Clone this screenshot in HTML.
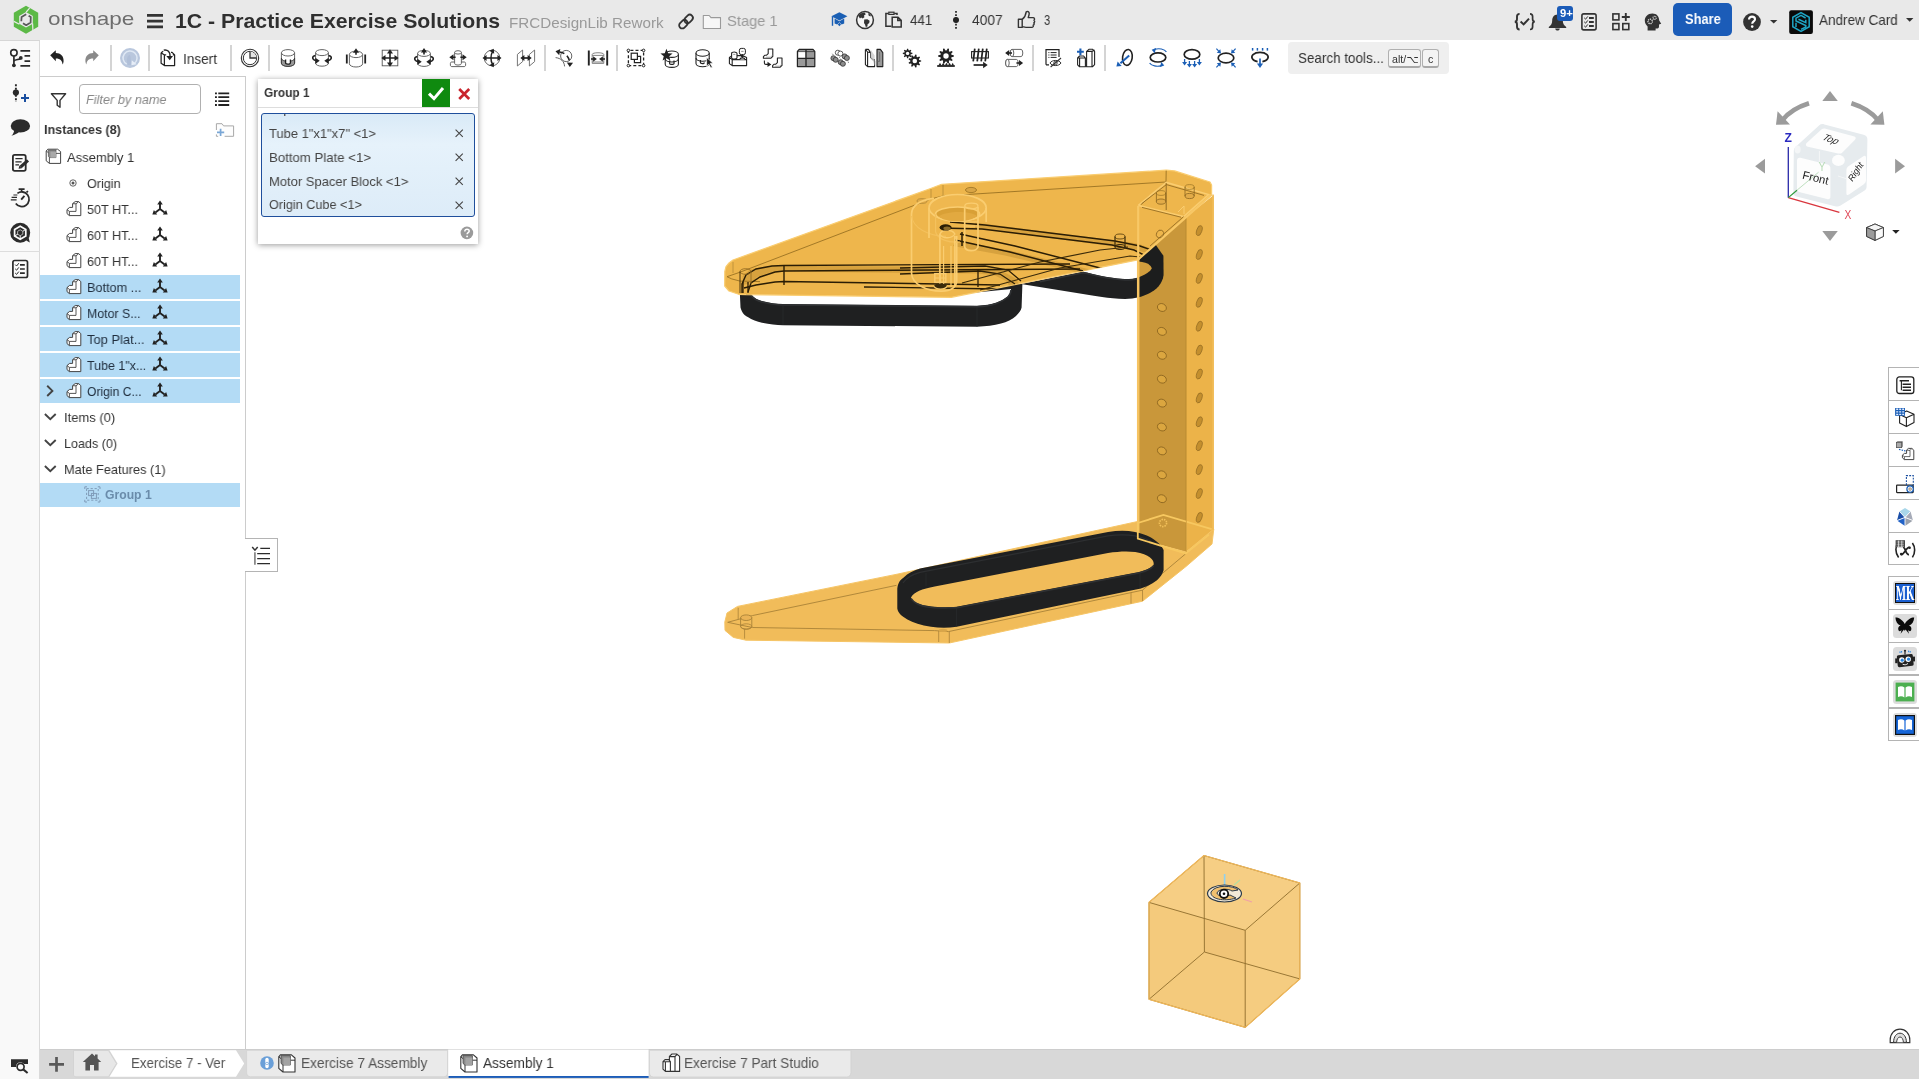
<!DOCTYPE html>
<html><head><meta charset="utf-8"><title>Onshape</title>
<style>
*{box-sizing:border-box;margin:0;padding:0}
html,body{width:1919px;height:1079px;overflow:hidden;background:#fff;font-family:"Liberation Sans","DejaVu Sans",sans-serif;color:#333}
.a{position:absolute}
.t{position:absolute;white-space:nowrap;transform-origin:0 50%;display:block;will-change:transform}
svg{position:absolute;overflow:visible}
#topbar{left:0;top:0;width:1919px;height:39.7px;background:#e9e9e9}
#strip{left:0;top:39.7px;width:40.2px;height:1040px;background:#f9f9f9;border-top:1px solid #d6d6d6;border-right:1px solid #dadada}
#panel{left:40px;top:76px;width:206px;height:974px;background:#fff;border-top:1px solid #ccc;border-right:1px solid #ccc}
#tabbar{left:40px;top:1049.1px;width:1879px;height:30px;background:#d8d8d8;border-top:1px solid #cdcdcd}
.sep{position:absolute;top:45px;width:2px;height:26px;background:#d4d4d4}
.sel{position:absolute;left:40px;width:200px;height:23.7px;background:#b3dbf5}
</style></head>
<body>
<div class="a" id="topbar"></div>
<div class="a" id="strip"></div>
<div class="a" id="panel"></div>
<div class="a" id="tabbar"></div>
<div class="sep" style="left:110px"></div>
<div class="sep" style="left:148px"></div>
<div class="sep" style="left:230px"></div>
<div class="sep" style="left:268px"></div>
<div class="sep" style="left:544px"></div>
<div class="sep" style="left:616px"></div>
<div class="sep" style="left:892px"></div>
<div class="sep" style="left:1032px"></div>
<div class="sep" style="left:1104px"></div>
<div class="a" style="left:1673px;top:3px;width:59px;height:33px;border-radius:5px;background:#1b5cb8"></div>
<div class="a" style="left:1288px;top:42px;width:161px;height:32px;border-radius:4px;background:#efefef"></div>
<div class="a" style="left:1388.2px;top:49.1px;width:33.2px;height:19.4px;border-radius:3px;background:#f4f4f4;border:1px solid #b0b0b0;border-bottom:2px solid #a8a8a8"></div>
<div class="a" style="left:1422.3px;top:49.1px;width:16.5px;height:19.4px;border-radius:3px;background:#f4f4f4;border:1px solid #b0b0b0;border-bottom:2px solid #a8a8a8"></div>
<div class="a" style="left:79px;top:84px;width:122px;height:30px;border-radius:4px;background:#fff;border:1px solid #b0b0b0"></div>
<div class="sel" style="top:275.1px"></div>
<div class="sel" style="top:301.1px"></div>
<div class="sel" style="top:327.1px"></div>
<div class="sel" style="top:353.1px"></div>
<div class="sel" style="top:379.1px"></div>
<div class="sel" style="top:483.2px"></div>
<div class="a" style="left:0;top:251px;width:40px;height:1px;background:#ddd"></div>
<div class="a" style="left:258px;top:79px;width:220px;height:164.5px;background:#fff;box-shadow:0 1px 6px rgba(0,0,0,.4)"></div>
<div class="a" style="left:258px;top:107px;width:220px;height:1px;background:#ddd"></div>
<div class="a" style="left:422px;top:79px;width:28px;height:28px;background:#0f8a0f"></div>
<div class="a" style="left:261px;top:113px;width:214px;height:103.6px;background:linear-gradient(#d9eaf7,#e6f2fb 30%,#ddecf8);border:1.2px solid #1f4f9c;border-radius:3px;overflow:hidden"><span class="t" style="left:6.5px;top:-12.6px;font-size:13.5px;line-height:16px;color:#444">Top Plate &lt;1&gt;</span></div>
<div class="a" style="left:245px;top:538px;width:33px;height:34px;background:#fff;border:1px solid #b4b4b4;border-left:none"></div>
<div class="a" style="left:1888.2px;top:367.4px;width:33px;height:198px;background:#fff;border:1.2px solid #b4b4b4"></div>
<div class="a" style="left:1888.2px;top:576.2px;width:33px;height:165.3px;background:#fff;border:1.2px solid #b4b4b4"></div>
<div class="a" style="left:1889px;top:399.9px;width:31px;height:1.2px;background:#b4b4b4"></div>
<div class="a" style="left:1889px;top:432.9px;width:31px;height:1.2px;background:#b4b4b4"></div>
<div class="a" style="left:1889px;top:465.79999999999995px;width:31px;height:1.2px;background:#b4b4b4"></div>
<div class="a" style="left:1889px;top:498.5px;width:31px;height:1.2px;background:#b4b4b4"></div>
<div class="a" style="left:1889px;top:531.6px;width:31px;height:1.2px;background:#b4b4b4"></div>
<div class="a" style="left:1889px;top:608.6px;width:31px;height:1.2px;background:#b4b4b4"></div>
<div class="a" style="left:1889px;top:641.6px;width:31px;height:1.2px;background:#b4b4b4"></div>
<div class="a" style="left:1889px;top:674.4px;width:31px;height:1.2px;background:#b4b4b4"></div>
<div class="a" style="left:1889px;top:707.4px;width:31px;height:1.2px;background:#b4b4b4"></div>
<svg style="left:13px;top:5px" width="26" height="29" viewBox="0 0 26 29"><polygon points="13,0.8 25.2,7.8 25.2,21.8 13,28.8 0.8,21.8 0.8,7.8" fill="#5cb946"/><polygon points="13,7 19.8,10.9 19.8,18.7 13,22.6 6.2,18.7 6.2,10.9" fill="#e9e9e9"/><path d="M16.6,3.2 L13.2,7 M0.8,16.4 L6.4,19.2 M19.6,18.4 L19.9,26" stroke="#e9e9e9" stroke-width="1.2" fill="none"/><path d="M13.2,9.3 L8.6,11.9 L8.3,16.2 M10,18.2 L13.2,20.2 L17.6,17.6 L17.8,12 L15.6,10.7" stroke="#595959" stroke-width="1.75" fill="none" stroke-linejoin="round"/></svg>
<svg style="left:147px;top:13px" width="16" height="16" viewBox="0 0 16 16"><path d="M0,2.4 H16 M0,8.1 H16 M0,13.8 H16" stroke="#333" stroke-width="2.7"/></svg>
<svg style="left:678px;top:14px" width="16" height="15" viewBox="0 0 16 15"><g transform="rotate(-45 8 7.6)" fill="none" stroke="#333" stroke-width="1.8"><rect x="-0.4" y="4.5" width="9.4" height="6.2" rx="3.1"/><rect x="7" y="4.5" width="9.4" height="6.2" rx="3.1"/></g></svg>
<svg style="left:702px;top:14px" width="20" height="16" viewBox="0 0 20 16"><path d="M1.3,14.5 V1.5 H7.2 L9,3.6 H18.5 V14.5 Z" fill="#f7f7f7" stroke="#9a9a9a" stroke-width="1.1" stroke-linejoin="round"/></svg>
<svg style="left:831px;top:12px" width="17" height="15" viewBox="0 0 17 15"><polygon points="8.4,0.2 16.4,4.2 8.4,8.4 0.4,4.2" fill="#1a5fb4"/><polygon points="3.6,6.6 3.6,11.4 6.2,12.4 8.4,10.2 10.6,12.4 13.2,11.4 13.2,6.6 8.4,9.3" fill="#1a5fb4"/><polygon points="8.4,10.8 10,12.4 8.4,14.2 6.8,12.4" fill="#1a5fb4"/><path d="M1.5,4.6 V13.8" stroke="#1a5fb4" stroke-width="1.4"/></svg>
<svg style="left:855px;top:10px" width="20" height="20" viewBox="0 0 20 20"><circle cx="10" cy="10" r="8.4" fill="#f4f4f4" stroke="#333" stroke-width="1.5"/><path d="M4.3,4.4 C6,3 8,2.3 9.6,2.4 L10.8,4.2 L9,5.4 L9.4,7.2 L7.6,8.4 L6.2,7.6 L5,8.6 L3.6,6.6 Z" fill="#333"/><path d="M9.2,9.6 L12.4,9.2 L14.6,10.8 L14.2,13 L12.6,14.2 L12.4,16.6 L10.8,17 L10,14.6 L9,13 Z" fill="#333"/><path d="M13.2,3 L15.8,5 L15.4,6.4 L13.6,5.6 Z" fill="#333"/></svg>
<svg style="left:885px;top:11px" width="18" height="17" viewBox="0 0 18 17"><path d="M6.4,15.2 H0.9 V2.5 H3.6 M9.2,2.5 H12 V4" fill="none" stroke="#333" stroke-width="1.5"/><rect x="3.8" y="1.2" width="5.2" height="2.2" fill="#e9e9e9" stroke="#333" stroke-width="1.2"/><path d="M7.2,16 V6.2 H13 L16.2,9.4 V16 Z M12.8,6.4 V9.6 H16" fill="none" stroke="#333" stroke-width="1.5"/></svg>
<svg style="left:950px;top:10px" width="12" height="20" viewBox="0 0 12 20"><path d="M6,1 V19" stroke="#222" stroke-width="1.7" stroke-dasharray="1.7 1.5"/><circle cx="6" cy="10" r="3" fill="#222"/></svg>
<svg style="left:1017px;top:10px" width="19" height="19" viewBox="0 0 19 19"><path d="M1.4,9.2 H5.2 V17.4 H1.4 Z" fill="none" stroke="#333" stroke-width="1.4" stroke-linejoin="round"/><path d="M5.2,9.4 C7.4,7.6 8.8,5 9.2,1.8 C10.6,1 12.2,1.8 12.2,3.6 C12.2,5.2 11.6,6.6 11.2,7.6 H16 C17.6,7.6 18,9.4 17,10.2 C18,11 17.8,12.4 16.8,12.8 C17.6,13.8 17,15 16.2,15.2 C16.6,16.4 16,17.4 14.8,17.4 H9 C7.4,17.4 6.4,16.8 5.2,16.6" fill="none" stroke="#333" stroke-width="1.4" stroke-linejoin="round"/></svg>
<svg style="left:1514px;top:13px" width="22" height="18" viewBox="0 0 22 18"><path d="M5.6,0.9 C3.4,0.9 3,2 3,3.6 V6 C3,7.6 2.4,8.6 0.8,8.7 C2.4,8.8 3,9.8 3,11.4 V13.8 C3,15.4 3.4,16.5 5.6,16.5" fill="none" stroke="#333" stroke-width="1.9"/><path d="M16,0.9 C18.2,0.9 18.6,2 18.6,3.6 V6 C18.6,7.6 19.2,8.6 20.8,8.7 C19.2,8.8 18.6,9.8 18.6,11.4 V13.8 C18.6,15.4 18.2,16.5 16,16.5" fill="none" stroke="#333" stroke-width="1.7"/><path d="M6.6,8.6 L9.6,11.4 L15,5.6" fill="none" stroke="#333" stroke-width="2"/></svg>
<svg style="left:1548px;top:14px" width="19" height="17" viewBox="0 0 19 17"><path d="M9.5,0.6 C6,0.6 4.2,3.4 4.2,6.6 C4.2,10 2.8,11.6 0.8,13 V14 H18.2 V13 C16.2,11.6 14.8,10 14.8,6.6 C14.8,3.4 13,0.6 9.5,0.6 Z" fill="#333"/><path d="M7.2,14.6 C7.4,16 8.4,16.6 9.5,16.6 C10.6,16.6 11.6,16 11.8,14.6Z" fill="#333"/></svg>
<div class="a" style="left:1557px;top:6px;width:16.4px;height:15.4px;border-radius:3px;background:#1a5bb8"></div>
<svg style="left:1581px;top:13px" width="16" height="18" viewBox="0 0 16 18"><rect x="0.9" y="0.9" width="14.2" height="16" rx="1.8" fill="none" stroke="#333" stroke-width="1.6"/><path d="M8,5 H12.8 M8,9 H12.8 M8,13 H12.8" stroke="#333" stroke-width="1.8"/><path d="M3.2,4.8 L4.6,6.2 L6.8,3.4 M3.2,8.8 L4.6,10.2 L6.8,7.4 M3.2,12.8 L4.6,14.2 L6.8,11.4" stroke="#333" stroke-width="1" fill="none"/></svg>
<svg style="left:1612px;top:13px" width="18" height="18" viewBox="0 0 18 18"><rect x="0.9" y="0.9" width="6" height="6" fill="none" stroke="#333" stroke-width="1.6"/><rect x="0.9" y="10.6" width="6" height="6" fill="none" stroke="#333" stroke-width="1.6"/><rect x="10.8" y="10.6" width="6" height="6" fill="none" stroke="#333" stroke-width="1.6"/><path d="M13.8,0 V8 M9.8,4 H17.8" stroke="#333" stroke-width="1.9"/></svg>
<svg style="left:1644px;top:13px" width="18" height="18" viewBox="0 0 18 18"><path d="M8.4,0.4 C3.6,0.4 0.8,3.8 0.8,7.6 C0.8,10.4 2.2,12.2 3.6,13.6 V17.6 H11.6 V15.4 H13.4 C14.6,15.4 15,14.6 15,13.6 V11.6 L17.2,10.8 L15.2,7.4 C15.2,3.2 12.6,0.4 8.4,0.4 Z" fill="#333"/><circle cx="6.2" cy="8.4" r="2.2" fill="none" stroke="#e9e9e9" stroke-width="1.3" stroke-dasharray="1.1 0.7"/><circle cx="10.6" cy="4.8" r="1.6" fill="none" stroke="#e9e9e9" stroke-width="1.1" stroke-dasharray="0.9 0.6"/></svg>
<svg style="left:1743px;top:13px" width="18" height="18" viewBox="0 0 18 18"><circle cx="9" cy="9" r="8.9" fill="#333"/><path d="M6,6.6 C6,4.6 7.4,3.6 9,3.6 C10.8,3.6 12,4.8 12,6.2 C12,8.4 9.2,8.4 9.2,10.8" fill="none" stroke="#fff" stroke-width="2.1"/><circle cx="9.2" cy="13.6" r="1.3" fill="#fff"/></svg>
<svg style="left:1770px;top:20px" width="8" height="4" viewBox="0 0 8 4"><polygon points="0,0 7.4,0 3.7,3.6" fill="#333"/></svg>
<svg style="left:1906px;top:18px" width="8" height="4" viewBox="0 0 8 4"><polygon points="0,0 7.4,0 3.7,3.8" fill="#333"/></svg>
<svg style="left:1789px;top:10px" width="24" height="24" viewBox="0 0 24 24"><rect x="0.2" y="0.2" width="23.7" height="23.7" rx="2" fill="#0a0a0a"/><polygon points="12,2.6 20.2,7.3 20.2,16.7 12,21.4 3.8,16.7 3.8,7.3" fill="none" stroke="#1fa5c5" stroke-width="1.5"/><path d="M16.6,8 L12,5.4 L7,8.2 V11 L16.8,15.6 V17 L12,19.4 M7,12.8 V17 M16.8,9.8 V12.6 L9.4,9.2" fill="none" stroke="#1fa5c5" stroke-width="1.5"/></svg>
<svg style="left:46.0px;top:46.5px" width="22" height="22" viewBox="-11.0 -11.0 22 22"><path d="M-6.8,-2.8 L-1.2,-7.8 V-4.9 C3.6,-4.9 6.8,-1.8 6.6,3.2 C6.5,4.6 6.1,5.7 5.5,6.6 C5.6,3 3.6,0.4 -1.2,0.4 V3.2 Z" fill="#222"/></svg>
<svg style="left:81.0px;top:46.5px" width="22" height="22" viewBox="-11.0 -11.0 22 22"><g transform="scale(-1 1)"><path d="M-6.8,-2.8 L-1.2,-7.8 V-4.9 C3.6,-4.9 6.8,-1.8 6.6,3.2 C6.5,4.6 6.1,5.7 5.5,6.6 C5.6,3 3.6,0.4 -1.2,0.4 V3.2 Z" fill="#8a8a8a"/></g></svg>
<svg style="left:118.0px;top:46.0px" width="24" height="24" viewBox="-12.0 -12.0 24 24"><circle r="10" fill="#b9c7dd"/><path d="M-3.2,6.2 A7,7 0 1 1 4.5,5.4" fill="none" stroke="#dfe8f4" stroke-width="1.5"/><path d="M0,-3 C-3,-3 -4,3 -2,7 L1.4,7 C0.6,3 1,-1 0,-3Z" fill="#b0bfd8"/><polygon points="1.8,2.2 6.6,6.2 1.4,7.2" fill="#e6edf7"/></svg>
<svg style="left:157.0px;top:47.0px" width="22" height="22" viewBox="-11.0 -11.0 22 22"><path d="M-6.9,-5.3 V5.3 L-3.6,7.5 H6.6 V-3.1 L4.1,-5.6 H3 M-6.9,-5.3 L-3.6,-3.1 V7.5 M-3.6,-3.1 H-1.8 M4.8,-3.1 H6.6 M-6.9,-5.3 L-4.8,-6.7" fill="none" stroke="#222" stroke-width="1.25" stroke-linejoin="round"/><path d="M-4.3,-7.9 C-0.4,-8.7 2.4,-6 2.1,-1.6" fill="none" stroke="#222" stroke-width="1.4"/><polygon points="-1.7,-2 5,-2 1.7,2.2" fill="#222"/></svg>
<svg style="left:239.2px;top:46.9px" width="22" height="22" viewBox="-11.0 -11.0 22 22"><circle r="8.7" fill="#fff" stroke="#333" stroke-width="1.1"/><circle r="6.7" fill="none" stroke="#333" stroke-width="1"/><path d="M0,-6.4 A6.4,6.4 0 0 1 6.4,0 H0Z" fill="#e4e4e4"/><path d="M0,-6.6 V0 H6.6" fill="none" stroke="#333" stroke-width="1.3"/></svg>
<svg style="left:277.0px;top:47.0px" width="22" height="22" viewBox="-11.0 -11.0 22 22"><path d="M-6.6,-5.2 V5.2 A6.6,3.2 0 0 0 6.6,5.2 V-5.2" fill="#fff" stroke="#555" stroke-width="0.9"/><ellipse cx="0" cy="-5.2" rx="6.6" ry="3.2" fill="#fff" stroke="#555" stroke-width="0.9"/><path d="M-6.6,0.2 V5.2 A6.6,3.2 0 0 0 6.6,5.2 V0.2 A6.6,3.2 0 0 1 -6.6,0.2Z" fill="#999" stroke="#333" stroke-width="0.9"/><path d="M-2.4,1.6 V5 C-2.4,6.4 2.4,6.4 2.4,5 V1.6" fill="#fff" stroke="#222" stroke-width="1.3"/></svg>
<svg style="left:311.0px;top:47.0px" width="22" height="22" viewBox="-11.0 -11.0 22 22"><path d="M-6.4,-5.4 V5.199999999999999 A6.4,3 0 0 0 6.4,5.199999999999999 V-5.4" fill="#fff" stroke="#555" stroke-width="0.9"/><ellipse cx="0" cy="-5.4" rx="6.4" ry="3" fill="#fff" stroke="#555" stroke-width="0.9"/><path d="M-6.6,-2.4 C-10.4,-1.6 -10.4,1.8 -5.4,2.6 M6.6,-2.4 C10.4,-1.6 10.4,1.8 5.4,2.6" fill="none" stroke="#222" stroke-width="1.5"/><polygon points="0.3,0 -4.03,-3.11 -4.03,3.11" fill="#222" transform="translate(-2.6 2.8) rotate(0)"/><polygon points="0.3,0 -4.03,-3.11 -4.03,3.11" fill="#222" transform="translate(2.6 2.8) rotate(180)"/></svg>
<svg style="left:345.0px;top:47.0px" width="22" height="22" viewBox="-11.0 -11.0 22 22"><path d="M-6.6,-3.6 V5.800000000000001 A6.6,3.2 0 0 0 6.6,5.800000000000001 V-3.6" fill="#fff" stroke="#555" stroke-width="0.9"/><ellipse cx="0" cy="-3.6" rx="6.6" ry="3.2" fill="#fff" stroke="#555" stroke-width="0.9"/><path d="M-9.2,-3.6 V5.6 M9.2,-3.6 V5.6" stroke="#222" stroke-width="1.8"/><path d="M0,-3.2 V-6" stroke="#222" stroke-width="1.6"/><polygon points="0.3,0 -4.03,-3.11 -4.03,3.11" fill="#222" transform="translate(0 -9.4) rotate(-90)"/></svg>
<svg style="left:379.0px;top:47.0px" width="22" height="22" viewBox="-11.0 -11.0 22 22"><rect x="-7.8" y="-7.8" width="15.6" height="15.6" fill="#fff" stroke="#555" stroke-width="0.9"/><path d="M-5,0 H5 M0,-5 V5" stroke="#222" stroke-width="1.6"/><polygon points="0.3,0 -3.89,-3.01 -3.89,3.01" fill="#222" transform="translate(-8.4 0) rotate(180)"/><polygon points="0.3,0 -3.89,-3.01 -3.89,3.01" fill="#222" transform="translate(8.4 0) rotate(0)"/><polygon points="0.3,0 -3.89,-3.01 -3.89,3.01" fill="#222" transform="translate(0 -8.4) rotate(-90)"/><polygon points="0.3,0 -3.89,-3.01 -3.89,3.01" fill="#222" transform="translate(0 8.4) rotate(90)"/></svg>
<svg style="left:413.0px;top:47.0px" width="22" height="22" viewBox="-11.0 -11.0 22 22"><path d="M-6.4,-4.6 V5.4 A6.4,3 0 0 0 6.4,5.4 V-4.6" fill="#fff" stroke="#555" stroke-width="0.9"/><ellipse cx="0" cy="-4.6" rx="6.4" ry="3" fill="#fff" stroke="#555" stroke-width="0.9"/><path d="M-6.6,-1.4 C-10.4,-0.6 -10.4,2.8 -5.4,3.6 M6.6,-1.4 C10.4,-0.6 10.4,2.8 5.4,3.6" fill="none" stroke="#222" stroke-width="1.5"/><polygon points="0.3,0 -4.03,-3.11 -4.03,3.11" fill="#222" transform="translate(-2.6 3.8) rotate(0)"/><polygon points="0.3,0 -4.03,-3.11 -4.03,3.11" fill="#222" transform="translate(2.6 3.8) rotate(180)"/><path d="M0,-3.6 V-6" stroke="#222" stroke-width="1.6"/><polygon points="0.3,0 -4.03,-3.11 -4.03,3.11" fill="#222" transform="translate(0 -9.6) rotate(-90)"/></svg>
<svg style="left:447.0px;top:47.0px" width="22" height="22" viewBox="-11.0 -11.0 22 22"><path d="M-7.6,5.4 C-7.6,4.4 -7,4 -6,4 H6 C7,4 7.6,4.4 7.6,5.4 V7 C7.6,8 7,8.6 6,8.6 H-6 C-7,8.6 -7.6,8 -7.6,7Z" fill="#fff" stroke="#555" stroke-width="0.9"/><path d="M-3.4,-5.6 V5.4 A3.4,1.7 0 0 0 3.4,5.4 V-5.6" fill="#fff" stroke="#555" stroke-width="0.9"/><ellipse cx="0" cy="-5.6" rx="3.4" ry="1.7" fill="#fff" stroke="#555" stroke-width="0.9"/><path d="M-5,-0.8 H-2.4 M5,-0.8 H2.4" stroke="#222" stroke-width="1.6"/><polygon points="0.3,0 -3.89,-3.01 -3.89,3.01" fill="#222" transform="translate(-8.4 -0.8) rotate(180)"/><polygon points="0.3,0 -3.89,-3.01 -3.89,3.01" fill="#222" transform="translate(8.4 -0.8) rotate(0)"/></svg>
<svg style="left:481.0px;top:47.0px" width="22" height="22" viewBox="-11.0 -11.0 22 22"><circle r="7.8" fill="#fff" stroke="#555" stroke-width="0.9"/><path d="M-6,0 H6 M0.6,-6.4 C-1.6,-3 -1.6,3 0.6,6.4" fill="none" stroke="#222" stroke-width="1.5"/><polygon points="0.3,0 -3.76,-2.90 -3.76,2.90" fill="#222" transform="translate(-9.2 0) rotate(180)"/><polygon points="0.3,0 -3.76,-2.90 -3.76,2.90" fill="#222" transform="translate(9.2 0) rotate(0)"/><polygon points="0.3,0 -3.76,-2.90 -3.76,2.90" fill="#222" transform="translate(1.6 -9) rotate(-60)"/><polygon points="0.3,0 -3.76,-2.90 -3.76,2.90" fill="#222" transform="translate(1.6 9) rotate(60)"/></svg>
<svg style="left:515.0px;top:47.0px" width="22" height="22" viewBox="-11.0 -11.0 22 22"><path d="M-8.6,-3.6 L-3.4,-8 V3.6 L-8.6,8 Z M3.4,-3.6 L8.6,-8 V3.6 L3.4,8 Z" fill="#fff" stroke="#666" stroke-width="0.9"/><path d="M-2.4,0 H2.4" stroke="#222" stroke-width="1.7"/><polygon points="0.3,0 -3.76,-2.90 -3.76,2.90" fill="#222" transform="translate(-5.4 0) rotate(180)"/><polygon points="0.3,0 -3.76,-2.90 -3.76,2.90" fill="#222" transform="translate(5.4 0) rotate(0)"/></svg>
<svg style="left:553.0px;top:47.0px" width="22" height="22" viewBox="-11.0 -11.0 22 22"><circle cx="2.2" cy="-2" r="5.6" fill="none" stroke="#555" stroke-width="0.9"/><path d="M-8.4,-0.4 C-3,0.2 0.2,3.4 0.6,8.4" fill="none" stroke="#555" stroke-width="0.9"/><path d="M-4.6,-6 C1,-5.6 5.4,-1 5.6,4.8" fill="none" stroke="#222" stroke-width="1.6" stroke-dasharray="5.2 3.4"/><polygon points="0.3,0 -4.03,-3.11 -4.03,3.11" fill="#222" transform="translate(-8.2 -6.6) rotate(190)"/><polygon points="0.3,0 -4.03,-3.11 -4.03,3.11" fill="#222" transform="translate(5.8 8.6) rotate(92)"/></svg>
<svg style="left:587.0px;top:47.0px" width="22" height="22" viewBox="-11.0 -11.0 22 22"><path d="M-5.8,-3.6 C-5.8,-5.8 5.8,-5.8 5.8,-3.6 V5.4 H-5.8Z M-5.8,-2.6 H5.8 M-5.8,4 H5.8" fill="#fff" stroke="#777" stroke-width="0.9"/><path d="M-9.2,-7.6 V7.6 M9.2,-7.6 V7.6" stroke="#222" stroke-width="1.9"/><path d="M-7,1 H-4 M7,1 H4" stroke="#222" stroke-width="1.5"/><polygon points="0.3,0 -3.49,-2.70 -3.49,2.70" fill="#222" transform="translate(-1.4 1) rotate(0)"/><polygon points="0.3,0 -3.49,-2.70 -3.49,2.70" fill="#222" transform="translate(1.4 1) rotate(180)"/></svg>
<svg style="left:625.0px;top:47.0px" width="22" height="22" viewBox="-11.0 -11.0 22 22"><rect x="-7.6" y="-7.6" width="15.2" height="15.2" fill="none" stroke="#222" stroke-width="1.3" stroke-dasharray="3 2.1" stroke-dashoffset="-2"/><rect x="-4.8" y="-4.8" width="6.2" height="6.2" fill="#fff" stroke="#222" stroke-width="1.2"/><path d="M1.4,-1.6 H4.6 V4.6 H-1.6 V1.4" fill="none" stroke="#222" stroke-width="1.2"/><circle cx="-7.6" cy="-7.6" r="1.3" fill="#fff" stroke="#222" stroke-width="1"/><circle cx="-7.6" cy="7.6" r="1.3" fill="#fff" stroke="#222" stroke-width="1"/><circle cx="7.6" cy="-7.6" r="1.3" fill="#fff" stroke="#222" stroke-width="1"/><circle cx="7.6" cy="7.6" r="1.3" fill="#fff" stroke="#222" stroke-width="1"/></svg>
<svg style="left:659.0px;top:47.0px" width="22" height="22" viewBox="-11.0 -11.0 22 22"><path d="M-4.8,-3.8 V6.2 A6.6,3.2 0 0 0 8.4,6.2 V-3.8" fill="#fff" stroke="#222" stroke-width="1.1"/><ellipse cx="1.8" cy="-3.8" rx="6.6" ry="3.2" fill="#fff" stroke="#222" stroke-width="1.1"/><path d="M-4.8,0.8 A6.6,3.2 0 0 0 8.4,0.8" fill="none" stroke="#222" stroke-width="1.1"/><path d="M-0.4,2.6 V5.4 C-0.4,6.8 4,6.8 4,5.4 V2.6" fill="none" stroke="#222" stroke-width="1.2"/><polygon points="-3.6,-9.2 -1.8,-4.8 2.6,-4.6 -0.8,-1.8 0.4,2.6 -3.6,0.2 -7.4,2.6 -6.2,-1.8 -9.6,-4.6 -5.2,-4.8" fill="#222"/></svg>
<svg style="left:693.0px;top:47.0px" width="22" height="22" viewBox="-11.0 -11.0 22 22"><path d="M-8.0,-5 V5.6 A6.6,3.2 0 0 0 5.199999999999999,5.6 V-5" fill="#fff" stroke="#222" stroke-width="1.1"/><ellipse cx="-1.4" cy="-5" rx="6.6" ry="3.2" fill="#fff" stroke="#222" stroke-width="1.1"/><path d="M-8,0 A6.6,3.2 0 0 0 5.2,0" fill="none" stroke="#222" stroke-width="1.1"/><path d="M-3.6,2 V4.6 C-3.6,6 0.4,6 0.4,4.6" fill="none" stroke="#222" stroke-width="1.2"/><path d="M2.6,-0.6 L9,5.2 L6.2,5.4 L8.4,9.2 L6.8,10 L4.8,6.2 L2.6,8.2 Z" fill="#222" stroke="#fff" stroke-width="0.7"/></svg>
<svg style="left:727.0px;top:47.0px" width="22" height="22" viewBox="-11.0 -11.0 22 22"><path d="M-8.6,-0.6 L-6,-2.4 H4.6 L8.6,-0.4 V7.6 H-5.8 L-8.6,5.6 Z M-5.8,1.6 V7.6 M-8.6,-0.6 L-5.8,1.6 H8.6" fill="#fff" stroke="#222" stroke-width="1.1" stroke-linejoin="round"/><path d="M-6.4,-1.6 V-4.6 C-6.4,-6.4 -1,-6.4 -1,-4.6 V-0.2 C-1,1.4 -6.4,1.4 -6.4,-0.2Z" fill="#fff" stroke="#222" stroke-width="1.1"/><path d="M-4.8,-3.6 H-2.6" stroke="#888" stroke-width="0.9"/><rect x="1.4" y="-9.6" width="6" height="6.2" rx="1.8" fill="#fff" stroke="#222" stroke-width="1"/><path d="M3.2,-6.6 H5.6" stroke="#888" stroke-width="0.9"/><path d="M4.4,-3.4 V-1.4" stroke="#222" stroke-width="0.9"/><polygon points="2.6,-2 6.2,-2 4.4,0.2" fill="#222"/><path d="M2,1.4 C2,-0.6 6.8,-0.6 6.8,1.4" fill="#fff" stroke="#222" stroke-width="1.1"/></svg>
<svg style="left:761.0px;top:47.0px" width="22" height="22" viewBox="-11.0 -11.0 22 22"><path d="M-7,-2.8 h1.6 l1.6,-1.6 v-4.6 h4.6 v7.4 l-1.8,1.8 h-7.6 l0,-1.6 Z" fill="#fff" stroke="#222" stroke-width="1.1" stroke-linejoin="round"/><path d="M-6,-0.8 H-1.6 L0.4,-2.6 M-1.6,-0.8 L-1.6,-1" fill="none" stroke="#999" stroke-width="0.8"/><path d="M2.2,6.2 h1.6 l1.6,-1.6 v-4.6 h4.6 v7.4 l-1.8,1.8 h-7.6 l0,-1.6 Z" fill="#fff" stroke="#222" stroke-width="1.1" stroke-linejoin="round" transform="translate(0 0)"/><path d="M3.2,8.2 H7.6 L9.6,6.4" fill="none" stroke="#999" stroke-width="0.8"/><path d="M-7.6,2.4 V5 C-7.6,6 -7,6.4 -6,6.4 H-3.6" fill="none" stroke="#222" stroke-width="1.1"/><polygon points="0.3,0 -3.49,-2.70 -3.49,2.70" fill="#222" transform="translate(-1 6.4) rotate(0)"/></svg>
<svg style="left:795.0px;top:47.0px" width="22" height="22" viewBox="-11.0 -11.0 22 22"><path d="M-8.6,-6.6 L-6.8,-8.6 H7 L8.8,-6.6 V8.6 H-8.6 Z" fill="#999" stroke="#222" stroke-width="1.2" stroke-linejoin="round"/><rect x="-7.6" y="-6.6" width="7" height="6.6" fill="#fff"/><path d="M-8.6,0.4 H8.8 M0,-8.4 V8.6" stroke="#222" stroke-width="1.3"/><path d="M-8.4,-6.4 H8.6" stroke="#222" stroke-width="0.7"/></svg>
<svg style="left:829.0px;top:47.0px" width="22" height="22" viewBox="-11.0 -11.0 22 22"><circle cx="-2.2" cy="-5.3" r="2.5" fill="#fff" stroke="#333" stroke-width="0.8"/><circle cx="0.4" cy="-4.4" r="2.5" fill="#fff" stroke="#333" stroke-width="0.8"/><circle cx="-6.6" cy="0.2" r="2.5" fill="#8c8c8c" stroke="#333" stroke-width="0.8"/><circle cx="-4.3" cy="1.8" r="2.5" fill="#8c8c8c" stroke="#333" stroke-width="0.8"/><circle cx="4.7" cy="-1.6" r="2.5" fill="#8c8c8c" stroke="#333" stroke-width="0.8"/><circle cx="6.9" cy="0" r="2.5" fill="#8c8c8c" stroke="#333" stroke-width="0.8"/><circle cx="0.7" cy="4.2" r="2.5" fill="#8c8c8c" stroke="#333" stroke-width="0.8"/><circle cx="2.9" cy="5.8" r="2.5" fill="#8c8c8c" stroke="#333" stroke-width="0.8"/><path d="M-7.6,-4.2 L-6.8,-3.2 M7.8,4 L8.8,4.4 M-0.6,-0.6 L0.2,0.2" stroke="#333" stroke-width="0.8"/></svg>
<svg style="left:863.0px;top:47.0px" width="22" height="22" viewBox="-11.0 -11.0 22 22"><path d="M-8.6,-8.6 H-5.6 L-3.4,-5.4 V-0.6 L-1.2,1.6 H1 M-8.6,-8.6 V6.6 L-6.4,8.6 H0.6 V3 L-1.8,0.6 M-6.4,-6 V8.6 M-8.6,-8.6 L-6.4,-6 L-3.4,-5.4" fill="#fff" stroke="#222" stroke-width="1.1" stroke-linejoin="round"/><path d="M-3.4,-8.6 L0.6,-2.6 V8 L-1,3 L-3.4,-0.6Z" fill="#ccc" opacity="0.8"/><path d="M3,-8.6 H6.4 L8.8,-5.4 V8.6 H3 Z" fill="#999" stroke="#222" stroke-width="1.1" stroke-linejoin="round"/><path d="M5.6,-6 V3.4 H3.4" fill="none" stroke="#666" stroke-width="0.8"/></svg>
<svg style="left:901.0px;top:47.0px" width="22" height="22" viewBox="-11.0 -11.0 22 22"><polygon points="0.37,-5.13 0.37,-4.07 -1.23,-3.68 -1.51,-3.01 -0.65,-1.60 -1.40,-0.85 -2.81,-1.71 -3.48,-1.43 -3.87,0.17 -4.93,0.17 -5.32,-1.43 -5.99,-1.71 -7.40,-0.85 -8.15,-1.60 -7.29,-3.01 -7.57,-3.68 -9.17,-4.07 -9.17,-5.13 -7.57,-5.52 -7.29,-6.19 -8.15,-7.60 -7.40,-8.35 -5.99,-7.49 -5.32,-7.77 -4.93,-9.37 -3.87,-9.37 -3.48,-7.77 -2.81,-7.49 -1.40,-8.35 -0.65,-7.60 -1.51,-6.19 -1.23,-5.52" fill="#222"/><circle cx="-4.4" cy="-4.6" r="1.7" fill="#fff"/><polygon points="9.17,2.38 9.17,3.62 7.16,4.12 6.86,4.94 8.08,6.62 7.28,7.57 5.42,6.66 4.66,7.10 4.52,9.16 3.29,9.38 2.45,7.49 1.59,7.33 0.16,8.83 -0.93,8.20 -0.35,6.22 -0.91,5.54 -2.97,5.77 -3.40,4.59 -1.68,3.44 -1.68,2.56 -3.40,1.41 -2.97,0.23 -0.91,0.46 -0.35,-0.22 -0.93,-2.20 0.16,-2.83 1.59,-1.33 2.45,-1.49 3.29,-3.38 4.52,-3.16 4.66,-1.10 5.42,-0.66 7.28,-1.57 8.08,-0.62 6.86,1.06 7.16,1.88" fill="#222"/><circle cx="2.8" cy="3" r="2.3" fill="#fff"/></svg>
<svg style="left:935.0px;top:47.0px" width="22" height="22" viewBox="-11.0 -11.0 22 22"><polygon points="7.77,-2.69 7.77,-1.31 5.46,-0.74 5.15,0.19 6.69,2.01 5.88,3.12 3.68,2.22 2.88,2.80 3.05,5.18 1.75,5.60 0.49,3.58 -0.49,3.58 -1.75,5.60 -3.05,5.18 -2.88,2.80 -3.68,2.22 -5.88,3.12 -6.69,2.01 -5.15,0.19 -5.46,-0.74 -7.77,-1.31 -7.77,-2.69 -5.46,-3.26 -5.15,-4.19 -6.69,-6.01 -5.88,-7.12 -3.68,-6.22 -2.88,-6.80 -3.05,-9.18 -1.75,-9.60 -0.49,-7.58 0.49,-7.58 1.75,-9.60 3.05,-9.18 2.88,-6.80 3.68,-6.22 5.88,-7.12 6.69,-6.01 5.15,-4.19 5.46,-3.26" fill="#222"/><circle cx="0" cy="-2" r="2.7" fill="#fff"/><path d="M-8.8,8 H8.8" stroke="#222" stroke-width="1.8"/><path d="M-7.6,7.4 L-6,4.8 L-4.4,7.4 L-2.8,4.8 L-1.2,7.4 L0.4,4.8 L2,7.4 L3.6,4.8 L5.2,7.4 L6.8,4.8 L8,7.4Z" fill="#222"/></svg>
<svg style="left:969.0px;top:47.0px" width="22" height="22" viewBox="-11.0 -11.0 22 22"><rect x="-8.4" y="-6.4" width="16.8" height="6.4" fill="#fff" stroke="#222" stroke-width="1.1"/><path d="M-5.2,-9.4 L-6.8,3.4" stroke="#222" stroke-width="1.7"/><path d="M-1.2,-9.4 L-2.8,3.4" stroke="#222" stroke-width="1.7"/><path d="M2.8,-9.4 L1.2,3.4" stroke="#222" stroke-width="1.7"/><path d="M6.8,-9.4 L5.2,3.4" stroke="#222" stroke-width="1.7"/><path d="M-6.4,7 H4" stroke="#222" stroke-width="1.7"/><polygon points="0.3,0 -4.29,-3.32 -4.29,3.32" fill="#222" transform="translate(7.4 7) rotate(0)"/></svg>
<svg style="left:1003.0px;top:47.0px" width="22" height="22" viewBox="-11.0 -11.0 22 22"><path d="M-2,-8.6 H7 A1.8,3.6 0 0 1 7,-1.4 H-2 A1.8,3.6 0 0 1 -2,-8.6Z" fill="#fff" stroke="#555" stroke-width="0.9"/><ellipse cx="-2" cy="-5" rx="1.8" ry="3.6" fill="#fff" stroke="#555" stroke-width="0.9"/><path d="M-6.6,1.4 H2.4000000000000004 A1.8,3.6 0 0 1 2.4000000000000004,8.6 H-6.6 A1.8,3.6 0 0 1 -6.6,1.4Z" fill="#fff" stroke="#555" stroke-width="0.9"/><ellipse cx="-6.6" cy="5" rx="1.8" ry="3.6" fill="#fff" stroke="#555" stroke-width="0.9"/><path d="M-5,-5 H-2" stroke="#222" stroke-width="1.6"/><polygon points="0.3,0 -3.76,-2.90 -3.76,2.90" fill="#222" transform="translate(-8.6 -5) rotate(180)"/><path d="M2.4,5 H5.4" stroke="#222" stroke-width="1.6"/><polygon points="0.3,0 -3.76,-2.90 -3.76,2.90" fill="#222" transform="translate(8.8 5) rotate(0)"/></svg>
<svg style="left:1042.0px;top:47.0px" width="22" height="22" viewBox="-11.0 -11.0 22 22"><path d="M-7,6.8 H-4 M-7,6.8 V-8.4 H6 V-1" fill="none" stroke="#222" stroke-width="1.2"/><path d="M-2.4,-5.4 H3.6 M-2.4,-3 H3.6 M-2.4,-0.6 H3.6" stroke="#222" stroke-width="1"/><path d="M-4.6,-5.4 H-3.6 M-4.6,-3 H-3.6 M-4.6,-0.6 H-3.6" stroke="#222" stroke-width="1"/><path d="M-3,5 C-1,1.6 6,1.6 8,5 C6,8.4 -1,8.4 -3,5Z" fill="none" stroke="#333" stroke-width="1"/><circle cx="2.5" cy="5" r="1.7" fill="none" stroke="#333" stroke-width="0.9"/><path d="M-2.4,9 L8,0" stroke="#333" stroke-width="1.1"/></svg>
<svg style="left:1075.0px;top:47.0px" width="22" height="22" viewBox="-11.0 -11.0 22 22"><path d="M0.6,-6.6 L3.2,-8.8 H6.4 L8.6,-6.6 V6.6 L6.4,8.8 H0.6 Z M0.6,-6.6 H6 V8.8 M6,-6.6 L8.6,-8" fill="#fff" stroke="#222" stroke-width="1.1" stroke-linejoin="round"/><path d="M-8.4,0 L-6.4,-2 H-2.4 L-0.6,0 V8.8 H-6.4 L-8.4,6.8Z M-6.4,0 H-0.8 M-6.4,0 V8.8 M-8.4,0 L-6.4,0" fill="#fff" stroke="#222" stroke-width="1.1" stroke-linejoin="round"/><path d="M-5.6,-9.6 V-2.8 M-9,-6.2 H-2.2" stroke="#1b5fb6" stroke-width="2.1"/></svg>
<svg style="left:1114.0px;top:47.0px" width="22" height="22" viewBox="-11.0 -11.0 22 22"><ellipse cx="2.4" cy="-0.6" rx="4.8" ry="8" fill="none" stroke="#222" stroke-width="1.6" transform="rotate(8 2.4 -0.6)"/><path d="M4.2,-2.4 L-4.6,5.2" stroke="#1b5fb6" stroke-width="2"/><polygon points="0.3,0 -4.03,-3.11 -4.03,3.11" fill="#1b5fb6" transform="translate(-8.4 8.4) rotate(139)"/></svg>
<svg style="left:1147.0px;top:47.0px" width="22" height="22" viewBox="-11.0 -11.0 22 22"><ellipse cx="0" cy="-0.6" rx="7.8" ry="4.6" fill="none" stroke="#222" stroke-width="1.7"/><path d="M-3.4,-8.6 C1,-10 6.4,-9 8.4,-6.2 M3.4,7.6 C-1,9 -6.4,8 -8.4,5" fill="none" stroke="#1b5fb6" stroke-width="1.2"/><polygon points="0.3,0 -3.49,-2.70 -3.49,2.70" fill="#1b5fb6" transform="translate(-6 -8.2) rotate(195)"/><polygon points="0.3,0 -3.49,-2.70 -3.49,2.70" fill="#1b5fb6" transform="translate(6 7.4) rotate(15)"/></svg>
<svg style="left:1181.0px;top:47.0px" width="22" height="22" viewBox="-11.0 -11.0 22 22"><ellipse cx="0" cy="-3.6" rx="7.8" ry="4.8" fill="none" stroke="#222" stroke-width="1.7"/><path d="M-7.4,1.0 V4.6" stroke="#1b5fb6" stroke-width="1.3"/><polygon points="0.3,0 -3.22,-2.49 -3.22,2.49" fill="#1b5fb6" transform="translate(-7.4 7.2) rotate(90)"/><path d="M-2.6,2.9999999999999996 V6.6" stroke="#1b5fb6" stroke-width="1.3"/><polygon points="0.3,0 -3.22,-2.49 -3.22,2.49" fill="#1b5fb6" transform="translate(-2.6 9.2) rotate(90)"/><path d="M2.6,2.9999999999999996 V6.6" stroke="#1b5fb6" stroke-width="1.3"/><polygon points="0.3,0 -3.22,-2.49 -3.22,2.49" fill="#1b5fb6" transform="translate(2.6 9.2) rotate(90)"/><path d="M7.4,1.0 V4.6" stroke="#1b5fb6" stroke-width="1.3"/><polygon points="0.3,0 -3.22,-2.49 -3.22,2.49" fill="#1b5fb6" transform="translate(7.4 7.2) rotate(90)"/></svg>
<svg style="left:1215.0px;top:47.0px" width="22" height="22" viewBox="-11.0 -11.0 22 22"><ellipse cx="0" cy="0" rx="7.8" ry="4.8" fill="none" stroke="#222" stroke-width="1.7"/><path d="M-9.6,-9.4 L-6.6,-6.2" stroke="#1b5fb6" stroke-width="1.2"/><polygon points="0.3,0 -3.22,-2.49 -3.22,2.49" fill="#1b5fb6" transform="translate(-5.2 -4.8) rotate(45)"/><path d="M-9.6,9.4 L-6.6,6.2" stroke="#1b5fb6" stroke-width="1.2"/><polygon points="0.3,0 -3.22,-2.49 -3.22,2.49" fill="#1b5fb6" transform="translate(-5.2 4.8) rotate(-45)"/><path d="M9.6,-9.4 L6.6,-6.2" stroke="#1b5fb6" stroke-width="1.2"/><polygon points="0.3,0 -3.22,-2.49 -3.22,2.49" fill="#1b5fb6" transform="translate(5.2 -4.8) rotate(135)"/><path d="M9.6,9.4 L6.6,6.2" stroke="#1b5fb6" stroke-width="1.2"/><polygon points="0.3,0 -3.22,-2.49 -3.22,2.49" fill="#1b5fb6" transform="translate(5.2 4.8) rotate(225)"/></svg>
<svg style="left:1249.0px;top:47.0px" width="22" height="22" viewBox="-11.0 -11.0 22 22"><path d="M2.4,3.6 C8,2.6 9.4,-1 7,-3.4 C3.6,-6.4 -3.6,-6.4 -7,-3.4 C-9.4,-1 -8,2.6 -2.4,3.6" fill="none" stroke="#222" stroke-width="1.7"/><path d="M-7.4,-10 V-7.4" stroke="#1b5fb6" stroke-width="1.5"/><path d="M-2.6,-10 V-7.4" stroke="#1b5fb6" stroke-width="1.5"/><path d="M2.6,-10 V-7.4" stroke="#1b5fb6" stroke-width="1.5"/><path d="M7.4,-10 V-7.4" stroke="#1b5fb6" stroke-width="1.5"/><path d="M0,0.6 V6" stroke="#1b5fb6" stroke-width="1.7"/><polygon points="0.3,0 -4.03,-3.11 -4.03,3.11" fill="#1b5fb6" transform="translate(0 9.6) rotate(90)"/></svg>
<svg style="left:8px;top:48px" width="24" height="21" viewBox="0 0 24 21"><circle cx="5.9" cy="4.8" r="3.2" fill="#fff" stroke="#2b2b2b" stroke-width="1.6"/><path d="M5.9,8 V17.3 M5.9,13.6 C5.9,11 12.8,12 12.8,9.9" fill="none" stroke="#2b2b2b" stroke-width="1.7"/><circle cx="5.9" cy="17.3" r="1.9" fill="#2b2b2b"/><circle cx="12.8" cy="9.9" r="1.9" fill="#2b2b2b"/><path d="M12.4,2.9 H22.1 M16.5,7.9 H22.1 M16.5,13.1 H22.1 M12.4,17.9 H22.1" stroke="#2b2b2b" stroke-width="1.9"/></svg>
<svg style="left:8px;top:82px" width="24" height="22" viewBox="0 0 24 22"><path d="M7.9,2.3 V19.9" stroke="#2b2b2b" stroke-width="1.9" stroke-dasharray="1.9 1.6"/><circle cx="7.9" cy="10.6" r="3.1" fill="#2b2b2b"/><path d="M17,11.9 V19.9 M13,15.9 H21" stroke="#1a4fa0" stroke-width="2"/></svg>
<svg style="left:8px;top:117px" width="24" height="20" viewBox="0 0 24 20"><ellipse cx="12.4" cy="8.9" rx="9.7" ry="6.6" fill="#2b2b2b"/><path d="M6.4,12.4 C6,15.4 5,17.2 3.4,18.8 C6.6,18 9.6,16.6 11.4,14.6Z" fill="#2b2b2b"/></svg>
<svg style="left:10px;top:152px" width="22" height="22" viewBox="0 0 22 22"><rect x="2.9" y="2.9" width="12.8" height="16" rx="1.8" fill="#fbfbfb" stroke="#2b2b2b" stroke-width="1.8"/><path d="M5.4,6.7 H12.6 M5.4,9.9 H11.6 M5.4,12.9 H9" stroke="#2b2b2b" stroke-width="1.3"/><path d="M18,8.4 L10.6,15" stroke="#2b2b2b" stroke-width="3.1"/><polygon points="8.6,16.8 9.4,13.6 11.8,16.2" fill="#2b2b2b"/><path d="M19,7.4 L18,8.4" stroke="#fbfbfb" stroke-width="0"/></svg>
<svg style="left:9px;top:187px" width="24" height="22" viewBox="0 0 24 22"><path d="M8.4,6.4 A7.3,7.3 0 1 1 6.8,16.4" fill="none" stroke="#2b2b2b" stroke-width="1.8"/><path d="M9.6,2.2 H15.6 M12.6,2.2 V4.8 M17.6,5.4 L18.9,4" stroke="#2b2b2b" stroke-width="1.7"/><path d="M4.4,8 H8.4 M2.6,10.4 H8 M1.8,12.8 H7.6" stroke="#2b2b2b" stroke-width="1.2"/><path d="M12.2,12.6 L15.4,8.8" stroke="#2b2b2b" stroke-width="1.9"/></svg>
<svg style="left:9px;top:222px" width="24" height="22" viewBox="0 0 24 22"><circle cx="11.2" cy="10.7" r="10" fill="#2b2b2b"/><polygon points="17.2,18.4 20.8,20.4 19.6,15.4" fill="#2b2b2b"/><polygon points="11.2,4.2 16.8,7.4 16.8,14 11.2,17.2 5.6,14 5.6,7.4" fill="none" stroke="#fbfbfb" stroke-width="1.7"/><polygon points="11.2,7.8 13.8,9.3 13.8,12.2 11.2,13.7 8.6,12.2 8.6,9.3" fill="none" stroke="#bbb" stroke-width="0.9"/><path d="M16.8,7.4 L13.8,9.3 M5.6,14 L8.8,12.2 M11.2,17.2 L11.2,13.6" stroke="#fbfbfb" stroke-width="1"/></svg>
<svg style="left:11px;top:259px" width="19" height="20" viewBox="0 0 19 20"><rect x="1.9" y="1.5" width="14.6" height="17" rx="1.8" fill="#fbfbfb" stroke="#2b2b2b" stroke-width="1.7"/><path d="M9,5.8 H13.8 M9,10 H13.8 M9,14.2 H13.8" stroke="#2b2b2b" stroke-width="1.7"/><path d="M4.2,5.6 L5.6,7 L7.8,4.2 M4.2,9.8 L5.6,11.2 L7.8,8.4 M4.2,14 L5.6,15.4 L7.8,12.6" stroke="#2b2b2b" stroke-width="1" fill="none"/></svg>
<svg style="left:50px;top:92px" width="17" height="17" viewBox="0 0 17 17"><path d="M1.4,1.8 H15.6 L10,8.4 V15.2 L7.2,13.2 V8.4 Z" fill="none" stroke="#333" stroke-width="1.4" stroke-linejoin="round"/></svg>
<svg style="left:214.9px;top:92px" width="15" height="15" viewBox="0 0 15 15"><path d="M0,1.3 H1.9 M3.3,1.3 H14.2" stroke="#222" stroke-width="1.8"/><path d="M0,5.2 H1.9 M3.3,5.2 H14.2" stroke="#222" stroke-width="1.8"/><path d="M0,9.1 H1.9 M3.3,9.1 H14.2" stroke="#222" stroke-width="1.8"/><path d="M0,13 H1.9 M3.3,13 H14.2" stroke="#222" stroke-width="1.8"/></svg>
<svg style="left:215px;top:122px" width="20" height="16" viewBox="0 0 20 16"><path d="M1.4,8 V1.7 H7 L8.6,3.9 H18.6 V14.3 H9.6" fill="#fdfdfd" stroke="#a8a8a8" stroke-width="1"/><path d="M1.4,12.4 V14.3 H3.2" fill="none" stroke="#a8a8a8" stroke-width="1"/><path d="M5.6,6.8 V14 M2,10.4 H9.2" stroke="#7aa7d6" stroke-width="1.7"/></svg>
<svg style="left:45px;top:148px" width="17" height="17" viewBox="0 0 17 17"><path d="M1.2,3 L2.8,1.2 H12.6 L15.6,3.6 V15.4 H4.4 L1.2,12.8 Z" fill="#fff" stroke="#444" stroke-width="1" stroke-linejoin="round"/><path d="M1.2,3 L4.4,5.4 V15.4 M4.4,5.4 H15.4" fill="none" stroke="#444" stroke-width="0.9"/><path d="M3.4,2 H11 V9.6 H4.6 L3.4,8.4Z" fill="#8c8c8c" stroke="#555" stroke-width="0.7"/><path d="M5.4,3.6 H11 V9.6 H5.4Z" fill="#a9a9a9"/></svg>
<svg style="left:68.4px;top:177.6px" width="10" height="10" viewBox="-5.0 -5.0 10 10"><circle r="3.2" fill="#fff" stroke="#555" stroke-width="0.9"/><circle r="1.5" fill="#555"/></svg>
<svg style="left:65.6px;top:200.6px" width="16" height="16" viewBox="0 0 16 16"><path d="M1,8.6 L3.6,6.4 H6.6 V2.6 L9.2,0.6 H12.6 L14.8,2.6 V14.6 H3.4 L1,12.6 Z" fill="#fff" stroke="#444" stroke-width="1" stroke-linejoin="round"/><path d="M1,8.6 L3.4,10.4 H10 V2.8 L6.8,2.7 M10,2.8 L12.6,0.8 M3.4,10.4 V14.6" fill="none" stroke="#444" stroke-width="0.9"/></svg>
<svg style="left:151.1px;top:199.2px" width="18" height="18" viewBox="-9.0 -9.0 18 18"><path d="M0,1 V-4 M0,1 L-4.6,4.4 M0,1 L4.6,4.4" stroke="#222" stroke-width="1.9" fill="none"/><polygon points="0.3,0 -3.62,-2.80 -3.62,2.80" fill="#222" transform="translate(0 -7.2) rotate(-90)"/><polygon points="0.3,0 -3.62,-2.80 -3.62,2.80" fill="#222" transform="translate(-7.4 6.4) rotate(144)"/><polygon points="0.3,0 -3.62,-2.80 -3.62,2.80" fill="#222" transform="translate(7.4 6.4) rotate(36)"/></svg>
<svg style="left:65.6px;top:226.6px" width="16" height="16" viewBox="0 0 16 16"><path d="M1,8.6 L3.6,6.4 H6.6 V2.6 L9.2,0.6 H12.6 L14.8,2.6 V14.6 H3.4 L1,12.6 Z" fill="#fff" stroke="#444" stroke-width="1" stroke-linejoin="round"/><path d="M1,8.6 L3.4,10.4 H10 V2.8 L6.8,2.7 M10,2.8 L12.6,0.8 M3.4,10.4 V14.6" fill="none" stroke="#444" stroke-width="0.9"/></svg>
<svg style="left:151.1px;top:225.2px" width="18" height="18" viewBox="-9.0 -9.0 18 18"><path d="M0,1 V-4 M0,1 L-4.6,4.4 M0,1 L4.6,4.4" stroke="#222" stroke-width="1.9" fill="none"/><polygon points="0.3,0 -3.62,-2.80 -3.62,2.80" fill="#222" transform="translate(0 -7.2) rotate(-90)"/><polygon points="0.3,0 -3.62,-2.80 -3.62,2.80" fill="#222" transform="translate(-7.4 6.4) rotate(144)"/><polygon points="0.3,0 -3.62,-2.80 -3.62,2.80" fill="#222" transform="translate(7.4 6.4) rotate(36)"/></svg>
<svg style="left:65.6px;top:252.6px" width="16" height="16" viewBox="0 0 16 16"><path d="M1,8.6 L3.6,6.4 H6.6 V2.6 L9.2,0.6 H12.6 L14.8,2.6 V14.6 H3.4 L1,12.6 Z" fill="#fff" stroke="#444" stroke-width="1" stroke-linejoin="round"/><path d="M1,8.6 L3.4,10.4 H10 V2.8 L6.8,2.7 M10,2.8 L12.6,0.8 M3.4,10.4 V14.6" fill="none" stroke="#444" stroke-width="0.9"/></svg>
<svg style="left:151.1px;top:251.2px" width="18" height="18" viewBox="-9.0 -9.0 18 18"><path d="M0,1 V-4 M0,1 L-4.6,4.4 M0,1 L4.6,4.4" stroke="#222" stroke-width="1.9" fill="none"/><polygon points="0.3,0 -3.62,-2.80 -3.62,2.80" fill="#222" transform="translate(0 -7.2) rotate(-90)"/><polygon points="0.3,0 -3.62,-2.80 -3.62,2.80" fill="#222" transform="translate(-7.4 6.4) rotate(144)"/><polygon points="0.3,0 -3.62,-2.80 -3.62,2.80" fill="#222" transform="translate(7.4 6.4) rotate(36)"/></svg>
<svg style="left:65.6px;top:278.6px" width="16" height="16" viewBox="0 0 16 16"><path d="M1,8.6 L3.6,6.4 H6.6 V2.6 L9.2,0.6 H12.6 L14.8,2.6 V14.6 H3.4 L1,12.6 Z" fill="#fff" stroke="#444" stroke-width="1" stroke-linejoin="round"/><path d="M1,8.6 L3.4,10.4 H10 V2.8 L6.8,2.7 M10,2.8 L12.6,0.8 M3.4,10.4 V14.6" fill="none" stroke="#444" stroke-width="0.9"/></svg>
<svg style="left:151.1px;top:277.2px" width="18" height="18" viewBox="-9.0 -9.0 18 18"><path d="M0,1 V-4 M0,1 L-4.6,4.4 M0,1 L4.6,4.4" stroke="#222" stroke-width="1.9" fill="none"/><polygon points="0.3,0 -3.62,-2.80 -3.62,2.80" fill="#222" transform="translate(0 -7.2) rotate(-90)"/><polygon points="0.3,0 -3.62,-2.80 -3.62,2.80" fill="#222" transform="translate(-7.4 6.4) rotate(144)"/><polygon points="0.3,0 -3.62,-2.80 -3.62,2.80" fill="#222" transform="translate(7.4 6.4) rotate(36)"/></svg>
<svg style="left:65.6px;top:304.6px" width="16" height="16" viewBox="0 0 16 16"><path d="M1,8.6 L3.6,6.4 H6.6 V2.6 L9.2,0.6 H12.6 L14.8,2.6 V14.6 H3.4 L1,12.6 Z" fill="#fff" stroke="#444" stroke-width="1" stroke-linejoin="round"/><path d="M1,8.6 L3.4,10.4 H10 V2.8 L6.8,2.7 M10,2.8 L12.6,0.8 M3.4,10.4 V14.6" fill="none" stroke="#444" stroke-width="0.9"/></svg>
<svg style="left:151.1px;top:303.2px" width="18" height="18" viewBox="-9.0 -9.0 18 18"><path d="M0,1 V-4 M0,1 L-4.6,4.4 M0,1 L4.6,4.4" stroke="#222" stroke-width="1.9" fill="none"/><polygon points="0.3,0 -3.62,-2.80 -3.62,2.80" fill="#222" transform="translate(0 -7.2) rotate(-90)"/><polygon points="0.3,0 -3.62,-2.80 -3.62,2.80" fill="#222" transform="translate(-7.4 6.4) rotate(144)"/><polygon points="0.3,0 -3.62,-2.80 -3.62,2.80" fill="#222" transform="translate(7.4 6.4) rotate(36)"/></svg>
<svg style="left:65.6px;top:330.6px" width="16" height="16" viewBox="0 0 16 16"><path d="M1,8.6 L3.6,6.4 H6.6 V2.6 L9.2,0.6 H12.6 L14.8,2.6 V14.6 H3.4 L1,12.6 Z" fill="#fff" stroke="#444" stroke-width="1" stroke-linejoin="round"/><path d="M1,8.6 L3.4,10.4 H10 V2.8 L6.8,2.7 M10,2.8 L12.6,0.8 M3.4,10.4 V14.6" fill="none" stroke="#444" stroke-width="0.9"/></svg>
<svg style="left:151.1px;top:329.2px" width="18" height="18" viewBox="-9.0 -9.0 18 18"><path d="M0,1 V-4 M0,1 L-4.6,4.4 M0,1 L4.6,4.4" stroke="#222" stroke-width="1.9" fill="none"/><polygon points="0.3,0 -3.62,-2.80 -3.62,2.80" fill="#222" transform="translate(0 -7.2) rotate(-90)"/><polygon points="0.3,0 -3.62,-2.80 -3.62,2.80" fill="#222" transform="translate(-7.4 6.4) rotate(144)"/><polygon points="0.3,0 -3.62,-2.80 -3.62,2.80" fill="#222" transform="translate(7.4 6.4) rotate(36)"/></svg>
<svg style="left:65.6px;top:356.6px" width="16" height="16" viewBox="0 0 16 16"><path d="M1,8.6 L3.6,6.4 H6.6 V2.6 L9.2,0.6 H12.6 L14.8,2.6 V14.6 H3.4 L1,12.6 Z" fill="#fff" stroke="#444" stroke-width="1" stroke-linejoin="round"/><path d="M1,8.6 L3.4,10.4 H10 V2.8 L6.8,2.7 M10,2.8 L12.6,0.8 M3.4,10.4 V14.6" fill="none" stroke="#444" stroke-width="0.9"/></svg>
<svg style="left:151.1px;top:355.2px" width="18" height="18" viewBox="-9.0 -9.0 18 18"><path d="M0,1 V-4 M0,1 L-4.6,4.4 M0,1 L4.6,4.4" stroke="#222" stroke-width="1.9" fill="none"/><polygon points="0.3,0 -3.62,-2.80 -3.62,2.80" fill="#222" transform="translate(0 -7.2) rotate(-90)"/><polygon points="0.3,0 -3.62,-2.80 -3.62,2.80" fill="#222" transform="translate(-7.4 6.4) rotate(144)"/><polygon points="0.3,0 -3.62,-2.80 -3.62,2.80" fill="#222" transform="translate(7.4 6.4) rotate(36)"/></svg>
<svg style="left:65.6px;top:382.6px" width="16" height="16" viewBox="0 0 16 16"><path d="M1,8.6 L3.6,6.4 H6.6 V2.6 L9.2,0.6 H12.6 L14.8,2.6 V14.6 H3.4 L1,12.6 Z" fill="#fff" stroke="#444" stroke-width="1" stroke-linejoin="round"/><path d="M1,8.6 L3.4,10.4 H10 V2.8 L6.8,2.7 M10,2.8 L12.6,0.8 M3.4,10.4 V14.6" fill="none" stroke="#444" stroke-width="0.9"/></svg>
<svg style="left:151.1px;top:381.2px" width="18" height="18" viewBox="-9.0 -9.0 18 18"><path d="M0,1 V-4 M0,1 L-4.6,4.4 M0,1 L4.6,4.4" stroke="#222" stroke-width="1.9" fill="none"/><polygon points="0.3,0 -3.62,-2.80 -3.62,2.80" fill="#222" transform="translate(0 -7.2) rotate(-90)"/><polygon points="0.3,0 -3.62,-2.80 -3.62,2.80" fill="#222" transform="translate(-7.4 6.4) rotate(144)"/><polygon points="0.3,0 -3.62,-2.80 -3.62,2.80" fill="#222" transform="translate(7.4 6.4) rotate(36)"/></svg>
<svg style="left:46px;top:385px" width="8" height="12" viewBox="0 0 8 12"><path d="M1.2,0.8 L6.4,5.9 L1.2,11" fill="none" stroke="#444" stroke-width="1.9"/></svg>
<svg style="left:43.9px;top:413.4px" width="13" height="8" viewBox="0 0 13 8"><path d="M0.9,1 L6.3,6.2 L11.7,1" fill="none" stroke="#444" stroke-width="1.9"/></svg>
<svg style="left:43.9px;top:439.4px" width="13" height="8" viewBox="0 0 13 8"><path d="M0.9,1 L6.3,6.2 L11.7,1" fill="none" stroke="#444" stroke-width="1.9"/></svg>
<svg style="left:43.9px;top:465.4px" width="13" height="8" viewBox="0 0 13 8"><path d="M0.9,1 L6.3,6.2 L11.7,1" fill="none" stroke="#444" stroke-width="1.9"/></svg>
<svg style="left:84px;top:486px" width="17" height="17" viewBox="0 0 17 17"><rect x="2.6" y="2.6" width="11.6" height="11.6" fill="none" stroke="#7f9bb8" stroke-width="1" stroke-dasharray="2.2 1.8"/><rect x="4.6" y="4.6" width="5" height="5" fill="none" stroke="#7f9bb8" stroke-width="1"/><rect x="7.4" y="7.4" width="5" height="5" fill="none" stroke="#7f9bb8" stroke-width="1"/><path d="M0.8,3 V0.8 H3 M13.8,0.8 H16 V3 M16,13.8 V16 H13.8 M3,16 H0.8 V13.8" fill="none" stroke="#7f9bb8" stroke-width="1"/></svg>
<svg style="left:250px;top:545px" width="22" height="22" viewBox="0 0 22 22"><path d="M2.2,2.1 L4.95,5.2 L7.7,2.1" fill="none" stroke="#333" stroke-width="1.5"/><path d="M4.9,7.3 V19.8" stroke="#8a8a8a" stroke-width="1.8"/><path d="M10.3,3.4 H20 M7.2,8.5 H20 M7.2,13.5 H20 M7.2,18.5 H20" stroke="#2b2b2b" stroke-width="1.25"/></svg>
<svg style="left:422px;top:79px" width="28" height="28" viewBox="0 0 28 28"><path d="M7,14.6 L12,19.6 L21,9" fill="none" stroke="#fff" stroke-width="3"/></svg>
<svg style="left:458px;top:88px" width="13" height="12" viewBox="0 0 13 12"><path d="M1.2,1 L11.2,11 M11.2,1 L1.2,11" stroke="#c9252d" stroke-width="2.7"/></svg>
<svg style="left:455px;top:129.10000000000002px" width="9" height="9" viewBox="0 0 9 9"><path d="M0.6,0.6 L7.8,7.8 M7.8,0.6 L0.6,7.8" stroke="#444" stroke-width="1.1"/></svg>
<svg style="left:455px;top:152.9px" width="9" height="9" viewBox="0 0 9 9"><path d="M0.6,0.6 L7.8,7.8 M7.8,0.6 L0.6,7.8" stroke="#444" stroke-width="1.1"/></svg>
<svg style="left:455px;top:177.0px" width="9" height="9" viewBox="0 0 9 9"><path d="M0.6,0.6 L7.8,7.8 M7.8,0.6 L0.6,7.8" stroke="#444" stroke-width="1.1"/></svg>
<svg style="left:455px;top:200.8px" width="9" height="9" viewBox="0 0 9 9"><path d="M0.6,0.6 L7.8,7.8 M7.8,0.6 L0.6,7.8" stroke="#444" stroke-width="1.1"/></svg>
<svg style="left:460px;top:226px" width="14" height="14" viewBox="0 0 14 14"><circle cx="6.9" cy="6.9" r="6.3" fill="#9a9a9a"/><path d="M4.8,5.4 C4.8,3.8 5.8,3.2 7,3.2 C8.2,3.2 9.2,4 9.2,5 C9.2,6.6 7.1,6.6 7.1,8.2" fill="none" stroke="#fff" stroke-width="1.5"/><circle cx="7.1" cy="10.4" r="0.95" fill="#fff"/></svg>
<svg style="left:10px;top:1058px" width="20" height="16" viewBox="0 0 20 16"><path d="M1,1.2 H18 V6 H14 C12,3.6 8,3.6 6.6,6.4 C6,7.6 6,8.4 6.2,9 H1 Z" fill="#2b2b2b"/><circle cx="10.6" cy="8.8" r="3.5" fill="#f9f9f9" stroke="#2b2b2b" stroke-width="1.7"/><path d="M13.2,11.4 L17.6,15" stroke="#2b2b2b" stroke-width="2.1"/></svg>
<svg style="left:49px;top:1057px" width="15" height="15" viewBox="0 0 15 15"><path d="M7.5,0 V14.8 M0.1,7.4 H15" stroke="#595959" stroke-width="2.7"/></svg>
<svg style="left:0;top:1049px" width="900" height="30" viewBox="0 1049 900 30"><path d="M73.5,1050.5 H108.5 L116.5,1063.6 L108.5,1076.8 H76 C74.5,1076.8 73.5,1076 73.5,1074.5 Z" fill="#e7e7e7" stroke="#cfcfcf" stroke-width="0.8"/><path d="M109.5,1050.3 H236 L244.2,1063.6 L236,1076.8 H109.5 L117.6,1063.6 Z" fill="#fff"/><path d="M246.6,1050.3 H447.6 V1072.6 C447.6,1075 446,1076.8 443.6,1076.8 H250.6 C248.2,1076.8 246.6,1075 246.6,1072.6 Z" fill="#eaeaea" stroke="#d0d0d0" stroke-width="0.7"/><rect x="448.2" y="1049.6" width="200.4" height="26.6" fill="#fff"/><rect x="448.6" y="1076" width="200" height="1.9" fill="#1b5cb8"/><path d="M649.4,1050.3 H850.9 V1072.6 C850.9,1075 849.3,1077 846.9,1077 H653.4 C651,1077 649.4,1075 649.4,1072.6 Z" fill="#eaeaea" stroke="#d0d0d0" stroke-width="0.7"/></svg>
<svg style="left:82px;top:1053px" width="20" height="18" viewBox="0 0 20 18"><path d="M10,0.4 L0.8,9 H3.4 V17.4 H8 V12 H12 V17.4 H16.6 V9 H19.2 L15.6,5.6 V1.6 H13 V3.2 Z" fill="#555"/></svg>
<svg style="left:258.8px;top:1054.7px" width="16" height="16" viewBox="-8.0 -8.0 16 16"><circle r="6.8" fill="#6a9fd8"/><rect x="-1.7" y="-5.2" width="3.4" height="10.4" rx="1.7" fill="#fff"/><circle r="1.6" cy="0.4" fill="#6a9fd8"/><circle r="1" cy="0.4" fill="#fff"/></svg>
<svg style="left:278.2px;top:1053.8px" width="18" height="19" viewBox="0 0 18 19"><path d="M0.8,2.8 L2.4,0.8 H13.4 L17,4 V18 H5 L0.8,14.4 Z" fill="#fff" stroke="#333" stroke-width="1.1" stroke-linejoin="round"/><path d="M0.8,2.8 L5,6.2 V18 M5,6.2 H17" fill="none" stroke="#333" stroke-width="1"/><path d="M3,1.6 H12.4 V11 H4.8 L3,9.4Z" fill="#8a8a8a" stroke="#444" stroke-width="0.8"/><path d="M5.4,3.6 H12.4 V11 H5.4Z" fill="#a3a3a3"/></svg>
<svg style="left:460px;top:1053.8px" width="18" height="19" viewBox="0 0 18 19"><path d="M0.8,2.8 L2.4,0.8 H13.4 L17,4 V18 H5 L0.8,14.4 Z" fill="#fff" stroke="#333" stroke-width="1.1" stroke-linejoin="round"/><path d="M0.8,2.8 L5,6.2 V18 M5,6.2 H17" fill="none" stroke="#333" stroke-width="1"/><path d="M3,1.6 H12.4 V11 H4.8 L3,9.4Z" fill="#8a8a8a" stroke="#444" stroke-width="0.8"/><path d="M5.4,3.6 H12.4 V11 H5.4Z" fill="#a3a3a3"/></svg>
<svg style="left:662px;top:1053px" width="19" height="20" viewBox="0 0 19 20"><path d="M7.4,3.4 L10,1 H14.6 L17.6,3.4 V18.4 H7.4 Z M13,3.6 V18.4 M7.4,3.4 L9.6,3.6 H13 L15,1.4" fill="#fff" stroke="#333" stroke-width="1.1" stroke-linejoin="round"/><path d="M1,8.6 L3,6.6 H6.8 L8.4,8.6 V18.4 H3.4 L1,16.2 Z M3.4,8.8 V18.4 M1,8.6 L3.4,8.8 H8.2" fill="#fff" stroke="#333" stroke-width="1.1" stroke-linejoin="round"/></svg>
<svg style="left:1889px;top:1028px" width="22" height="16" viewBox="0 0 22 16"><path d="M1.2,14.6 V12 C1.2,5.6 5.6,1.2 11,1.2 C16.4,1.2 20.8,5.6 20.8,12 V14.6 Z" fill="#fff" stroke="#333" stroke-width="1.2"/><path d="M4.6,14.4 C4.6,8.6 7.4,5.2 11,5.2 C14.6,5.2 17.4,8.6 17.4,14.4 Z" fill="#ddd" stroke="#333" stroke-width="1"/><path d="M7.6,14.2 C7.8,11 9.2,9 11,9 C12.8,9 14.2,11 14.4,14.2" fill="#fff" stroke="#333" stroke-width="0.9"/></svg>
<svg style="left:1895px;top:375px" width="20" height="20" viewBox="0 0 20 20"><rect x="1.8" y="1.9" width="17" height="16.6" rx="2.6" fill="#fff" stroke="#222" stroke-width="1.3"/><path d="M4.6,5.8 H14 M7.6,9.2 H16 M7.6,12.2 H16 M7.6,15.2 H16" stroke="#222" stroke-width="1.5"/><path d="M6.4,5.8 V15.2" stroke="#222" stroke-width="1.1"/></svg>
<svg style="left:1894px;top:407px" width="22" height="21" viewBox="0 0 22 21"><path d="M5.6,7.4 L12.6,4 L20,7.2 V15.6 L12.4,19.6 L5.6,16 Z M5.6,7.4 L12.4,10.8 L20,7.2 M12.4,10.8 V19.6" fill="#fff" stroke="#222" stroke-width="1.1" stroke-linejoin="round"/><rect x="1.1" y="1" width="9.9" height="7.8" fill="#1b5fb6"/><path d="M2.2,2.3 H4.2 M5.2,2.3 H7.2 M8.2,2.3 H10.1 M2.2,4.9 H4.2 M5.2,4.9 H7.2 M8.2,4.9 H10.1 M2.2,7.4 H4.2 M5.2,7.4 H7.2 M8.2,7.4 H10.1" stroke="#dfeaff" stroke-width="1.4"/></svg>
<svg style="left:1895px;top:441px" width="20" height="20" viewBox="0 0 20 20"><rect x="1.4" y="1.4" width="5.2" height="5.2" fill="#aaa" stroke="#555" stroke-width="0.8"/><path d="M1.4,1.4 L2.4,0.6 H7.4 V5.6 L6.6,6.6" fill="none" stroke="#555" stroke-width="0.7"/><path d="M4,8.4 L10.6,10" stroke="#1b5fb6" stroke-width="1.2" stroke-dasharray="1.6 1"/><path d="M7.4,14.2 L9.4,12.4 H11.6 V9 L13.4,7.4 H16.8 L18.8,9.2 V18.6 H9.4 L7.4,16.8 Z" fill="#fff" stroke="#444" stroke-width="1" stroke-linejoin="round"/><path d="M7.4,14.2 L9.4,15.6 H15 V9.4 L11.8,9.2 M15,9.4 L16.8,7.6 M9.4,15.6 V18.6" fill="none" stroke="#444" stroke-width="0.8"/></svg>
<svg style="left:1895px;top:474px" width="20" height="20" viewBox="0 0 20 20"><rect x="1.6" y="11.2" width="16.6" height="7.4" rx="0.5" fill="#fff" stroke="#222" stroke-width="1.2"/><path d="M11.4,11.2 V1.6 H18.3 V11.6" fill="none" stroke="#1b4fa0" stroke-width="1.1" stroke-dasharray="1.9 1.2"/><circle cx="15.1" cy="15.1" r="3.2" fill="#fff" stroke="#1b5fb6" stroke-width="1.3"/><circle cx="15.1" cy="15.1" r="1.4" fill="#e8c9a0" stroke="#777" stroke-width="0.6"/></svg>
<svg style="left:1896px;top:507px" width="18" height="20" viewBox="0 0 18 20"><polygon points="9,1 14.6,4.4 9,10.4 3.4,4.4" fill="#a9d7ea"/><polygon points="3.4,4.4 9,10.4 1,13.6" fill="#1b4fa8"/><polygon points="1,13.6 9,10.4 9,19 " fill="#2262c6"/><polygon points="14.6,4.4 17,13.6 9,10.4" fill="#a6abb8"/><polygon points="17,13.6 9,19 9,10.4" fill="#9aa0ab"/><path d="M3.4,4.4 L9,10.4 L14.6,4.4 M1,13.6 L9,10.4 L17,13.6 M9,10.4 V19" stroke="#fff" stroke-width="0.9" fill="none"/></svg>
<svg style="left:1894px;top:539px" width="22" height="20" viewBox="0 0 22 20"><path d="M4.6,3 C1,7 1,14 4.6,18.4 M18.4,4 C21.4,8 21.4,14 18.4,18.4" fill="none" stroke="#222" stroke-width="1.6"/><path d="M7,15.6 C9.4,16.6 12,8.6 15.4,8.2 M9,8.4 C11.6,7.6 11.4,16 15,15.6" fill="none" stroke="#222" stroke-width="1.8"/><circle cx="7.2" cy="15" r="1.3" fill="#222"/><circle cx="15.6" cy="8.8" r="1.3" fill="#222"/><rect x="1.6" y="1.2" width="9.4" height="7" fill="#444"/><path d="M2.6,3 H10 M2.6,5.2 H10 M2.6,7.2 H10" stroke="#fff" stroke-width="0.5"/><path d="M4.6,1.6 V8 M7.8,1.6 V8" stroke="#fff" stroke-width="0.7"/></svg>
<div class="a" style="left:1893.3px;top:581.3px;width:23.4px;height:23.4px;border-radius:3.5px;background:#dcdcdc"></div>
<div class="a" style="left:1893.3px;top:614.3px;width:23.4px;height:23.4px;border-radius:3.5px;background:#dcdcdc"></div>
<div class="a" style="left:1893.3px;top:647.3px;width:23.4px;height:23.4px;border-radius:3.5px;background:#dcdcdc"></div>
<div class="a" style="left:1893.3px;top:680.3px;width:23.4px;height:23.4px;border-radius:3.5px;background:#dcdcdc"></div>
<div class="a" style="left:1893.3px;top:713.3px;width:23.4px;height:23.4px;border-radius:3.5px;background:#dcdcdc"></div>
<div class="a" style="left:1895px;top:583px;width:20px;height:20px;background:#1b5fd0;border:1px solid #111"></div>
<svg style="left:1894px;top:616px" width="22" height="20" viewBox="0 0 22 20"><path d="M10.8,8 C8,3 3.4,1.2 1.4,1.6 C1.6,5.6 3.6,8.6 6.6,9.6 C4.4,10.4 3.6,12.6 4.6,14.4 C5.4,15.8 6.8,15 7.6,14 L6.6,17.8 L10,13.4 L10.8,15 L11.6,13.4 L15,17.8 L14,14 C14.8,15 16.2,15.8 17,14.4 C18,12.6 17.2,10.4 15,9.6 C18,8.6 20,5.6 20.2,1.6 C18.2,1.2 13.6,3 10.8,8 Z" fill="#0b0b0b"/></svg>
<svg style="left:1894px;top:648px" width="22" height="22" viewBox="0 0 22 22"><rect x="3.2" y="6.6" width="16" height="12" rx="1.6" fill="#222" transform="rotate(-6 11 12)"/><rect x="1.2" y="10.4" width="2.4" height="4.8" fill="#222"/><rect x="18.6" y="8.6" width="2.4" height="4.8" fill="#222"/><path d="M11,6.6 V3.4" stroke="#222" stroke-width="1.2"/><circle cx="11" cy="2.8" r="1.1" fill="#222"/><circle cx="7.8" cy="12" r="2.7" fill="#fff"/><circle cx="14.2" cy="11.2" r="2.7" fill="#fff"/><circle cx="8.2" cy="12.2" r="1.6" fill="#2a86e0"/><circle cx="14.6" cy="11.2" r="1.6" fill="#2a86e0"/><path d="M8.6,16.2 C10.6,17.2 12.6,16.8 14,15.4" stroke="#fff" stroke-width="0.9" fill="none"/><path d="M6,3.4 V5 M7.6,3 V4.6 M14.6,2.6 V4.2 M16.2,3 V4.6" stroke="#2a86e0" stroke-width="1"/></svg>
<svg style="left:1894px;top:681px" width="22" height="22" viewBox="0 0 22 22"><rect x="1.6" y="1.6" width="18.8" height="18.8" fill="#4caf50" /><path d="M4,6 C6.4,5 8.6,5.2 10.4,6.4 V16.4 C8.6,15.2 6.4,15 4,16 Z M18,6 C15.6,5 13.4,5.2 11.6,6.4 V16.4 C13.4,15.2 15.6,15 18,16 Z" fill="#fff"/></svg>
<svg style="left:1894px;top:714px" width="22" height="22" viewBox="0 0 22 22"><rect x="1.6" y="1.6" width="18.8" height="18.8" fill="#1565d8" stroke="#111" stroke-width="1.2"/><path d="M4,6 C6.4,5 8.6,5.2 10.4,6.4 V16.4 C8.6,15.2 6.4,15 4,16 Z M18,6 C15.6,5 13.4,5.2 11.6,6.4 V16.4 C13.4,15.2 15.6,15 18,16 Z" fill="#fff"/></svg>
<svg style="left:0;top:0" width="1919" height="260" viewBox="0 0 1919 260"><polygon points="1830,91 1837.8,100.9 1822.3,100.9" fill="#9b9b9b"/><polygon points="1830,240.9 1837.8,231 1822.3,231" fill="#9b9b9b"/><polygon points="1755.1,166.2 1765,158.8 1765,173.6" fill="#9b9b9b"/><polygon points="1905,166.2 1895.1,158.8 1895.1,173.6" fill="#9b9b9b"/><path d="M1809,103.2 C1797,107 1788,113 1782.5,120" fill="none" stroke="#9b9b9b" stroke-width="4.6"/><polygon points="1776,124.8 1777.6,111.2 1790,124.6" fill="#9b9b9b"/><path d="M1851.4,103.2 C1863.4,107 1872.4,113 1877.9,120" fill="none" stroke="#9b9b9b" stroke-width="4.6"/><polygon points="1884.4,124.8 1882.8,111.2 1870.4,124.6" fill="#9b9b9b"/><path d="M1795.5,147 L1819,125.4 C1820.6,124 1822.4,123.8 1824.4,124.4 L1863.6,134.8 C1866.4,135.6 1867.4,137 1867.4,139.6 L1866.6,186.4 C1866.6,188.4 1865.8,189.8 1864.2,190.8 L1840.6,205.6 C1838.8,206.6 1837,206.8 1835,206.2 L1796.4,196.6 C1794.2,196 1793.4,194.6 1793.4,192.6 L1793.8,151 C1793.8,149.4 1794.4,148 1795.5,147 Z" fill="#e6ebee"/><path d="M1806.6,143 L1821.4,129.6 C1822.6,128.6 1824,128.4 1825.6,128.8 L1853.6,136.2 C1856,136.8 1856.4,138.4 1854.8,140 L1842.4,152.4 C1841.2,153.6 1839.6,153.8 1838,153.4 L1808,146.8 C1805.8,146.2 1805.2,144.4 1806.6,143 Z" fill="#fdfdfd"/><path d="M1797,160.6 C1797,158.4 1798.4,157.4 1800.4,157.8 L1827.6,164.6 C1829.6,165.2 1830.4,166.4 1830.4,168.4 V196.4 C1830.4,198.6 1829,199.6 1827,199 L1800,192.2 C1798,191.6 1797,190.4 1797,188.4 Z" fill="#fdfdfd"/><path d="M1846.4,170.4 C1846.4,168.6 1847.2,167 1848.8,166 L1863,156.4 C1864.8,155.2 1866,156 1866,158 V180 C1866,181.8 1865.2,183.2 1863.8,184.2 L1849,194.6 C1847.4,195.6 1846.4,195 1846.4,193.2 Z" fill="#fdfdfd"/><ellipse cx="1838.4" cy="160.4" rx="6.4" ry="5.6" fill="#fdfdfd"/><ellipse cx="1797.6" cy="149.6" rx="3" ry="4" fill="#f4f6f7"/><path d="M1819.4,151 V162" stroke="#f4f6f7" stroke-width="1"/><path d="M1838,176 L1846,178.6" stroke="#f4f6f7" stroke-width="1"/><line x1="1788.3" y1="147" x2="1788.3" y2="197.8" stroke="#2a2aa8" stroke-width="1.3"/><line x1="1788.3" y1="197.6" x2="1839.4" y2="212.4" stroke="#d9363e" stroke-width="1.3"/><line x1="1788.3" y1="197.6" x2="1797" y2="190.2" stroke="#2e9a3a" stroke-width="1.2"/><line x1="1797" y1="190.2" x2="1818.6" y2="172.2" stroke="#bfe0c0" stroke-width="1"/><text x="1784.6" y="142.4" font-family="Liberation Sans, sans-serif" font-size="13.5" font-weight="700" fill="#2a2ac0" textLength="7.4" lengthAdjust="spacingAndGlyphs">Z</text><text x="1844.6" y="218.8" font-family="Liberation Sans, sans-serif" font-size="13" fill="#e04a5a" textLength="6.8" lengthAdjust="spacingAndGlyphs">X</text><text x="1818.6" y="171.2" font-family="Liberation Sans, sans-serif" font-size="12" fill="#b9dcb8" textLength="7" lengthAdjust="spacingAndGlyphs">Y</text><text font-family="Liberation Sans, sans-serif" font-size="9.6" font-style="italic" fill="#222" text-anchor="middle" transform="translate(1828.8 142) rotate(20) skewX(-18)">Top</text><text font-family="Liberation Sans, sans-serif" font-size="11.4" fill="#222" text-anchor="middle" transform="translate(1814.6 181.6) rotate(14)">Front</text><text font-family="Liberation Sans, sans-serif" font-size="9" font-style="italic" fill="#222" text-anchor="middle" textLength="20.5" lengthAdjust="spacingAndGlyphs" transform="translate(1858.2 173.4) rotate(-56)">Right</text><path d="M1866.6,227.6 L1875,224 L1883.4,227.6 V236.4 L1875,240.4 L1866.6,236.4 Z" fill="#bbb" stroke="#333" stroke-width="1" stroke-linejoin="round"/><path d="M1866.6,227.6 L1875,231 L1883.4,227.6 L1875,224Z" fill="#f4f4f4" stroke="#333" stroke-width="0.8" stroke-linejoin="round"/><path d="M1875,231 V240.4 L1883.4,236.4 V227.6Z" fill="#fafafa" stroke="#333" stroke-width="0.8" stroke-linejoin="round"/><path d="M1866.6,227.6 L1875,231 V240.4 L1866.6,236.4Z" fill="#9c9c9c" stroke="#333" stroke-width="0.8" stroke-linejoin="round"/><polygon points="1892.2,230 1899.6,230 1895.9,233.8" fill="#222"/></svg>
<svg id="model" style="left:0;top:0" width="1919" height="1079" viewBox="0 0 1919 1079">
<path d="M1021,284 L1083,271.7 C1095,274 1104,277.5 1125,279 C1140,279 1150,275 1156,262 L1158,250 L1166,250 L1166,272 C1164,288 1150,298 1125,299 C1108,298.5 1095,296 1083,294 Z" fill="#1f2021"/>
<path fill-rule="evenodd" fill="#1f2021" d="M739.7,290 L740.5,307.5 C742,313 745,316 747.8,317 C752,320 757,321.5 762,322.8 C770,324.5 776,325 783,325.2 L977,326.8 C986,326.5 994,325.5 1001,323.6 C1007,322 1012,319.5 1016,316 C1019,313 1021,310.5 1021.6,307.5 L1022.4,284 L995,284 L739.7,290 Z M751,294 C754,298 758,300 762,301 C770,303 776,304 783,304 L977,305.8 C985,305.5 991,304.5 996.5,302.6 C1002,300.5 1005,298.5 1008,296 C1010,294 1011,292 1011,289 L951,295 Z"/>
<path d="M751,295.4 C754,299 758,301 762,302 C770,304 776,305 783,305 L977,306.8 C985,306.5 991,305.5 996.5,303.6 C1002,301.5 1005,299.5 1008,297 C1010,295 1011,293 1011,290" fill="none" stroke="#303234" stroke-width="1.6"/>
<path d="M783,305.5 V325 M977,307 V326.6" stroke="#2a2b2d" stroke-width="0.8"/>
<path d="M1040,281.6 L1083,272.6 C1095,275 1104,278.5 1125,280 C1131,280 1135,279.4 1138,278.4" fill="none" stroke="#303234" stroke-width="1.6"/>
<polygon points="1137.5,206.0 1186.0,217.0 1186.0,552.0 1137.5,539.0" fill="#c9973a" />
<polygon points="1186.0,217.0 1213.8,195.0 1213.8,530.0 1186.0,552.0" fill="#ecb349" />
<path d="M1137.5,260 L1155.5,244.5 L1163.4,255.7 L1163.6,275 C1162,287 1152,294 1137.5,297.6 Z" fill="#1c1d1d"/>
<path d="M1138.3,261.5 C1146,262 1151,264.5 1151.8,268.5 C1149.5,272.5 1144,275.5 1138.3,277.5 Z" fill="#d19d3d"/>
<ellipse cx="1161.9" cy="307.5" rx="4.6" ry="3.8" transform="rotate(25 1161.9 307.5)" fill="#dba63f" stroke="#8a6420" stroke-width="0.8"/>
<ellipse cx="1161.9" cy="331.4" rx="4.6" ry="3.8" transform="rotate(25 1161.9 331.4)" fill="#dba63f" stroke="#8a6420" stroke-width="0.8"/>
<ellipse cx="1161.9" cy="355.3" rx="4.6" ry="3.8" transform="rotate(25 1161.9 355.3)" fill="#dba63f" stroke="#8a6420" stroke-width="0.8"/>
<ellipse cx="1161.9" cy="379.2" rx="4.6" ry="3.8" transform="rotate(25 1161.9 379.2)" fill="#dba63f" stroke="#8a6420" stroke-width="0.8"/>
<ellipse cx="1161.9" cy="403.1" rx="4.6" ry="3.8" transform="rotate(25 1161.9 403.1)" fill="#dba63f" stroke="#8a6420" stroke-width="0.8"/>
<ellipse cx="1161.9" cy="427.0" rx="4.6" ry="3.8" transform="rotate(25 1161.9 427.0)" fill="#dba63f" stroke="#8a6420" stroke-width="0.8"/>
<ellipse cx="1161.9" cy="450.9" rx="4.6" ry="3.8" transform="rotate(25 1161.9 450.9)" fill="#dba63f" stroke="#8a6420" stroke-width="0.8"/>
<ellipse cx="1161.9" cy="474.8" rx="4.6" ry="3.8" transform="rotate(25 1161.9 474.8)" fill="#dba63f" stroke="#8a6420" stroke-width="0.8"/>
<ellipse cx="1161.9" cy="498.7" rx="4.6" ry="3.8" transform="rotate(25 1161.9 498.7)" fill="#dba63f" stroke="#8a6420" stroke-width="0.8"/>
<ellipse cx="1199.3" cy="230.6" rx="2.6" ry="5.2" transform="rotate(18 1199.3 230.6)" fill="#c48f2e" stroke="#8a6420" stroke-width="0.6"/>
<ellipse cx="1199.3" cy="254.5" rx="2.6" ry="5.2" transform="rotate(18 1199.3 254.5)" fill="#c48f2e" stroke="#8a6420" stroke-width="0.6"/>
<ellipse cx="1199.3" cy="278.4" rx="2.6" ry="5.2" transform="rotate(18 1199.3 278.4)" fill="#c48f2e" stroke="#8a6420" stroke-width="0.6"/>
<ellipse cx="1199.3" cy="302.3" rx="2.6" ry="5.2" transform="rotate(18 1199.3 302.3)" fill="#c48f2e" stroke="#8a6420" stroke-width="0.6"/>
<ellipse cx="1199.3" cy="326.2" rx="2.6" ry="5.2" transform="rotate(18 1199.3 326.2)" fill="#c48f2e" stroke="#8a6420" stroke-width="0.6"/>
<ellipse cx="1199.3" cy="350.1" rx="2.6" ry="5.2" transform="rotate(18 1199.3 350.1)" fill="#c48f2e" stroke="#8a6420" stroke-width="0.6"/>
<ellipse cx="1199.3" cy="374.0" rx="2.6" ry="5.2" transform="rotate(18 1199.3 374.0)" fill="#c48f2e" stroke="#8a6420" stroke-width="0.6"/>
<ellipse cx="1199.3" cy="397.9" rx="2.6" ry="5.2" transform="rotate(18 1199.3 397.9)" fill="#c48f2e" stroke="#8a6420" stroke-width="0.6"/>
<ellipse cx="1199.3" cy="421.8" rx="2.6" ry="5.2" transform="rotate(18 1199.3 421.8)" fill="#c48f2e" stroke="#8a6420" stroke-width="0.6"/>
<ellipse cx="1199.3" cy="445.7" rx="2.6" ry="5.2" transform="rotate(18 1199.3 445.7)" fill="#c48f2e" stroke="#8a6420" stroke-width="0.6"/>
<ellipse cx="1199.3" cy="469.6" rx="2.6" ry="5.2" transform="rotate(18 1199.3 469.6)" fill="#c48f2e" stroke="#8a6420" stroke-width="0.6"/>
<ellipse cx="1199.3" cy="493.5" rx="2.6" ry="5.2" transform="rotate(18 1199.3 493.5)" fill="#c48f2e" stroke="#8a6420" stroke-width="0.6"/>
<ellipse cx="1199.3" cy="517.4" rx="2.6" ry="5.2" transform="rotate(18 1199.3 517.4)" fill="#c48f2e" stroke="#8a6420" stroke-width="0.6"/>
<polyline points="1186.0,217.0 1186.0,552.0" fill="none" stroke="#b88a30" stroke-width="1" />
<polyline points="1138.2,206.0 1138.2,539.0" fill="none" stroke="#f6c361" stroke-width="2.5" />
<polygon points="724.8,622.0 727.0,613.0 737.5,606.4 898.0,574.0 1137.5,521.5 1137.5,539.0 1186.0,552.0 1213.8,529.0 1212.0,544.0 1186.0,566.5 1142.6,601.2 949.3,643.0 746.0,640.2 733.3,637.4 725.0,630.4" fill="#f1bc5a" stroke="#f6c566" stroke-width="1" stroke-linejoin="round"/>
<polyline points="727.7,622.3 752.3,615.6 896.5,585.3" fill="none" stroke="#a98238" stroke-width="0.9" />
<polyline points="727.7,622.3 752.3,627.5 934.5,630.6 948.5,631.6 1142.4,590.2 1186.0,553.5" fill="none" stroke="#a98238" stroke-width="0.9" />
<polyline points="738.2,607.8 738.2,619.4" fill="none" stroke="#a98238" stroke-width="0.8" />
<ellipse cx="746.2" cy="617.7" rx="5.6" ry="2.8" fill="#eab356" stroke="#a98238" stroke-width="0.9"/>
<path d="M740.6,617.7 V626.6 C742,630.2 750.4,630.2 751.8,626.6 V617.7" fill="none" stroke="#a98238" stroke-width="0.9"/>
<ellipse cx="746.2" cy="626.4" rx="5.6" ry="2.6" fill="none" stroke="#a98238" stroke-width="0.8"/>
<polyline points="744.6,629.0 744.6,638.6" fill="none" stroke="#a98238" stroke-width="0.8" />
<polyline points="938.7,630.6 938.7,642.0" fill="none" stroke="#a98238" stroke-width="0.8" />
<polyline points="949.3,631.6 949.3,643.0" fill="none" stroke="#a98238" stroke-width="0.8" />
<polyline points="1142.5,590.0 1142.6,601.0" fill="none" stroke="#a98238" stroke-width="0.8" />
<polyline points="1131.0,592.8 1131.0,603.8" fill="none" stroke="#a98238" stroke-width="0.8" />
<ellipse cx="943" cy="630.4" rx="4.4" ry="1.6" fill="#d9a64a"/>
<path fill-rule="evenodd" fill="#1f2021" d="M897.3,588.4 C898,583 900,580 903.7,577.5 C908,573 913,570.5 920,568.4 L1108,531.9 C1118,530.5 1127,530.5 1135,531.9 C1143,533.5 1149,536 1153.6,539.2 C1159,543 1162,546 1163.6,550 L1163.6,570.2 C1162.5,574 1160,577.5 1157,580.2 C1152,584 1147,586.5 1140.8,588.4 L956.6,626.7 C948,628 940,628 931,626.7 C921,625 913,622.5 907.4,619.4 C901,616 898,612.5 897.3,608.5 Z M911,597.5 C914,592 922,589 934.7,586.6 L1108,552.9 C1118,551.5 1127,551 1135.3,552 C1142,553 1147,555 1150,557.4 C1153,559.5 1154,562 1153.6,564.7 C1151,568 1146,570.5 1139,572 L956.6,606.7 C949,607.5 942,607.5 934.7,606.7 C926,606 920,604.5 916.5,603 C913,601.5 911,600 911,597.5 Z"/>
<path d="M903,583 C906,578 912,574.6 920,572.4 L1108,535.9 C1118,534.5 1127,534.5 1135,535.9 C1143,537.5 1149,540 1153.6,543.2" fill="none" stroke="#2d2f31" stroke-width="1.2"/>
<path d="M911,598.5 C914,603 920,605.5 926,606.8 C934,608 942,608.5 949,607.7 L956.6,607.7 L1139,573 C1146,571.5 1151,569 1153.6,565.7" fill="none" stroke="#303234" stroke-width="1.5"/>
<path d="M956.6,607.5 V626.5 M1140,572.5 V588.4 M926,573 V586" stroke="#2a2b2d" stroke-width="0.8"/>
<polyline points="1137.8,523.0 1163.4,515.0 1211.7,529.2" fill="none" stroke="#f7c860" stroke-width="1.8" />
<polyline points="1137.8,522.4 1137.8,538.6 1185.6,553.4 1209.0,534.6" fill="none" stroke="#f7c860" stroke-width="1.8" />
<circle cx="1163" cy="523" r="3.6" fill="none" stroke="#f2c05a" stroke-width="1.6" stroke-dasharray="1.5 1"/>
<polyline points="1186.4,552.0 1186.4,520.0" fill="none" stroke="#d8a545" stroke-width="1" />
<polygon points="724.8,271.5 726.0,266.6 729.0,263.0 733.0,260.0 930.6,188.5 941.7,184.3 1166.2,170.2 1174.6,170.9 1210.0,182.0 1211.6,185.0 1211.6,194.5 1137.7,259.9 951.3,297.3 746.0,294.6 738.6,294.3 729.0,291.0 724.7,286.0" fill="#eeb64c" stroke="#facd70" stroke-width="1.2" stroke-linejoin="round"/>
<clipPath id="tpc"><polygon points="724.8,271.5 726.0,266.6 729.0,263.0 733.0,260.0 930.6,188.5 941.7,184.3 1166.2,170.2 1174.6,170.9 1210.0,182.0 1211.6,185.0 1211.6,194.5 1137.7,259.9 951.3,297.3 746.0,294.6 738.6,294.3 729.0,291.0 724.7,286.0"/></clipPath><g clip-path="url(#tpc)">
<polyline points="727.0,276.7 740.0,272.2 795.0,251.1 931.0,198.9 943.0,196.0 1166.0,182.0 1166.2,170.5" fill="none" stroke="#9a7223" stroke-width="0.9" />
<polyline points="727.0,276.7 731.7,278.9 740.0,281.1 760.0,281.6" fill="none" stroke="#9a7223" stroke-width="0.9" />
<polyline points="1166.0,182.0 1139.8,205.6" fill="none" stroke="#9a7223" stroke-width="0.9" />
<polyline points="931.0,199.0 931.0,189.0" fill="none" stroke="#b48a38" stroke-width="0.8" />
<polyline points="943.0,196.0 943.0,185.0" fill="none" stroke="#b48a38" stroke-width="0.8" />
<polyline points="733.0,273.0 733.0,262.0" fill="none" stroke="#b48a38" stroke-width="0.8" />
<polygon points="742.5,276.0 750.0,269.5 765.0,266.5 785.0,265.5 983.0,267.5 1000.0,270.0 1015.0,278.0 1021.0,287.0 1011.0,288.0 1006.0,281.0 995.0,275.5 978.0,273.5 785.0,271.5 768.0,273.0 757.0,277.0 752.0,283.0 742.5,285.0" fill="#a97a22" opacity="0.33"/>
<polygon points="975.0,222.5 1138.0,243.5 1152.0,249.0 1150.0,254.5 1136.0,249.5 975.0,228.0" fill="#a97a22" opacity="0.33"/>
<polygon points="956.0,240.5 1010.0,250.5 1092.0,270.0 1084.0,274.0 1005.0,255.5 953.0,246.0" fill="#a97a22" opacity="0.33"/>
<polyline points="742.0,293.0 742.0,284.0 746.0,275.0 756.0,269.0 772.0,266.0 784.0,265.5 1070.0,264.0" fill="none" stroke="#2a1d05" stroke-width="1.4" />
<polyline points="748.0,292.0 751.0,283.0 760.0,277.0 775.0,272.0 784.0,271.0 1080.0,269.0" fill="none" stroke="#2a1d05" stroke-width="1.4" />
<polyline points="744.0,288.0 756.0,285.0 775.0,282.0 784.0,281.5 1000.0,285.0" fill="none" stroke="#2a1d05" stroke-width="1.4" />
<polyline points="784.0,266.0 784.0,285.0" fill="none" stroke="#2a1d05" stroke-width="1.4" />
<polyline points="864.0,287.0 1000.0,289.0" fill="none" stroke="#2a1d05" stroke-width="1.3" />
<polyline points="978.0,270.0 978.0,287.0" fill="none" stroke="#2a1d05" stroke-width="1.3" />
<polyline points="900.0,274.0 980.0,271.0 1000.0,274.0 1015.0,284.0" fill="none" stroke="#2a1d05" stroke-width="1.3" />
<polyline points="900.0,268.0 985.0,266.0 1008.0,270.0 1021.0,281.0" fill="none" stroke="#2a1d05" stroke-width="1.3" />
<polyline points="950.0,222.0 985.0,225.0 1115.0,241.0 1140.0,246.0 1160.0,253.0" fill="none" stroke="#2a1d05" stroke-width="1.5" />
<polyline points="940.0,228.0 982.0,229.0 1112.0,245.0 1134.0,250.0 1150.0,258.0" fill="none" stroke="#2a1d05" stroke-width="1.5" />
<polyline points="955.0,240.0 1010.0,252.0 1083.0,271.0" fill="none" stroke="#2a1d05" stroke-width="1.5" />
<polyline points="960.0,234.0 1015.0,246.0 1100.0,268.0 1125.0,272.0 1140.0,270.0" fill="none" stroke="#2a1d05" stroke-width="1.5" />
<polyline points="962.0,283.0 1040.0,262.0 1100.0,250.0 1128.0,247.0" fill="none" stroke="#3a2a0a" stroke-width="1.2" />
<polyline points="980.0,290.0 1060.0,268.0 1130.0,256.0 1150.0,258.0" fill="none" stroke="#3a2a0a" stroke-width="1.2" />
<polyline points="962.0,232.0 962.0,246.0" fill="none" stroke="#2a1d05" stroke-width="1.5" />
<ellipse cx="1120" cy="236.5" rx="5" ry="2.5" fill="none" stroke="#5c420f" stroke-width="0.9"/>
<ellipse cx="1120" cy="247" rx="5" ry="2.5" fill="none" stroke="#3a2a0a" stroke-width="1"/>
<polyline points="1115.0,236.5 1115.0,247.0" fill="none" stroke="#3a2a0a" stroke-width="1.2" />
<polyline points="1125.0,236.5 1125.0,247.0" fill="none" stroke="#3a2a0a" stroke-width="1.2" />
<ellipse cx="971" cy="190" rx="5.5" ry="2.6" fill="#d9a545" stroke="#9a7223" stroke-width="0.8"/>
<ellipse cx="922" cy="201" rx="5" ry="2.4" fill="#e0aa48" stroke="#b48a38" stroke-width="0.8"/>
<ellipse cx="745.5" cy="271.5" rx="5.5" ry="2.8" fill="none" stroke="#8a6420" stroke-width="0.8"/>
<polyline points="740.0,271.5 740.0,293.0" fill="none" stroke="#4a350c" stroke-width="1" />
<polyline points="751.0,271.5 751.0,284.0" fill="none" stroke="#8a6420" stroke-width="0.8" />
<polyline points="743.0,282.0 743.0,293.0" fill="none" stroke="#2a1d05" stroke-width="1.3" />
<polyline points="748.0,282.0 748.0,293.0" fill="none" stroke="#2a1d05" stroke-width="1.3" />
</g>
<path d="M911.5,214 V273 C912,284 926,291.4 942,291.2 C951,291 956.7,287 956.7,281 V236" fill="none" stroke="#facd70" stroke-width="1.7"/>
<path d="M911.5,214 C912,205 921,200 934,198.4" fill="none" stroke="#facd70" stroke-width="1.7"/>
<path d="M911.5,216 C913,228 928,236 946,236.4" fill="none" stroke="#f4c15d" stroke-width="1.1"/>
<ellipse cx="957.6" cy="207.8" rx="28.6" ry="13.3" fill="#efb850" stroke="#facd70" stroke-width="1.7"/>
<path d="M929,208 V238 M986.2,208 V222" fill="none" stroke="#facd70" stroke-width="1.7"/>
<ellipse cx="957.6" cy="214" rx="22" ry="7" fill="#d9a036" stroke="#facd70" stroke-width="1.7"/>
<path d="M938.5,216.5 C946,223 969,223 977,216 C970,210.5 946,210.5 938.5,216.5Z" fill="#e2a940"/>
<path d="M935.6,214 V232 C938,240 950,243 960,242" fill="none" stroke="#f4c15d" stroke-width="1.2"/>
<path d="M964.7,207 V247 C966,252 976,252 978,247 V207" fill="none" stroke="#facd70" stroke-width="1.7"/>
<ellipse cx="971.4" cy="206" rx="6.6" ry="2.8" fill="none" stroke="#facd70" stroke-width="1.3"/>
<path d="M964.7,222 H978 M966,226 H977" stroke="#facd70" stroke-width="1.1"/>
<path d="M939.9,234 V287 M954.9,236 V286" fill="none" stroke="#facd70" stroke-width="1.7"/>
<path d="M939.9,234 C942,229 952,229 954.9,234 C952,239 942,239 939.9,234Z" fill="none" stroke="#facd70" stroke-width="1.3"/>
<ellipse cx="945.6" cy="227.4" rx="6" ry="3.2" fill="#2a1d05"/>
<ellipse cx="947" cy="228.4" rx="3.6" ry="1.8" fill="#8a6a2a"/>
<path d="M943.6,246 V287 M951,246 V287" stroke="#facd70" stroke-width="1.2"/>
<rect x="934.8" y="273.6" width="11" height="8.6" fill="none" stroke="#facd70" stroke-width="1.4"/><path d="M940.3,273.6 V282.2 M934.8,278 H945.8" stroke="#facd70" stroke-width="1"/>
<ellipse cx="940.5" cy="286.2" rx="6.4" ry="2.6" fill="#3a2a0a"/>
<path d="M934,286.4 C936,290 945,290 947,286.4" fill="none" stroke="#facd70" stroke-width="1.2"/>
<polyline points="1138.3,205.4 1166.2,182.4 1208.6,194.6 1183.6,216.6 1138.3,205.4" fill="none" stroke="#facd70" stroke-width="1.6" />
<polyline points="1141.5,203.8 1166.4,184.6 1204.0,195.4" fill="none" stroke="#8a6420" stroke-width="0.8" />
<polyline points="1166.2,183.0 1166.2,210.0" fill="none" stroke="#8a6420" stroke-width="0.9" />
<polyline points="1142.0,207.4 1181.0,217.2" fill="none" stroke="#8a6420" stroke-width="0.8" />
<polyline points="1183.6,216.6 1150.0,246.0" fill="none" stroke="#8a6420" stroke-width="0.8" />
<polyline points="1178.0,212.0 1184.0,206.0 1184.0,214.0" fill="none" stroke="#facd70" stroke-width="1" />
<ellipse cx="1161" cy="201.6" rx="4.6" ry="2.6" fill="#e2ab48" stroke="#8a6420" stroke-width="0.8"/>
<ellipse cx="1189.6" cy="196" rx="4.6" ry="2.6" fill="#e2ab48" stroke="#8a6420" stroke-width="0.8"/>
<ellipse cx="1161" cy="193" rx="4.6" ry="2.4" fill="none" stroke="#9a7223" stroke-width="0.7"/>
<ellipse cx="1189.6" cy="187" rx="4.6" ry="2.4" fill="none" stroke="#9a7223" stroke-width="0.7"/>
<polyline points="1156.4,193.0 1156.4,201.6" fill="none" stroke="#8a6420" stroke-width="0.8" />
<polyline points="1165.6,193.0 1165.6,201.6" fill="none" stroke="#8a6420" stroke-width="0.8" />
<polyline points="1185.0,187.0 1185.0,196.0" fill="none" stroke="#8a6420" stroke-width="0.8" />
<polyline points="1194.2,187.0 1194.2,196.0" fill="none" stroke="#8a6420" stroke-width="0.8" />
<ellipse cx="1160" cy="234" rx="3.4" ry="4" transform="rotate(25 1160 234)" fill="none" stroke="#8a6420" stroke-width="0.8"/>
<polyline points="1138.3,259.0 1138.3,206.0 1211.6,194.8" fill="none" stroke="none" stroke-width="0" />
<polyline points="1138.2,260.0 1138.2,205.8" fill="none" stroke="#f8c866" stroke-width="2.2" />
<polyline points="1137.7,259.9 1211.6,194.8" fill="none" stroke="#f8c866" stroke-width="2" />
<polyline points="1213.0,194.5 1213.0,530.0" fill="none" stroke="#f2bd58" stroke-width="1.5" />
<polygon points="1204.0,855.5 1299.8,883.0 1299.8,978.9 1245.2,1027.4 1149.0,999.3 1149.0,902.4" fill="#f5cc80" />
<polygon points="1204.4,952.0 1204.2,919.5 1245.2,930.3 1245.2,964.0" fill="#ecc176" />
<polygon points="1204.0,855.5 1299.8,883.0 1245.2,930.3 1149.0,902.4" fill="#f6cf86" opacity="0.55"/>
<polygon points="1149.0,902.4 1245.2,930.3 1245.2,1027.4 1149.0,999.3" fill="#f3c878" opacity="0.5"/>
<polyline points="1204.0,855.5 1149.0,902.4" fill="none" stroke="#8f6d2c" stroke-width="0.9" />
<polyline points="1204.0,855.5 1299.8,883.0" fill="none" stroke="#8f6d2c" stroke-width="0.9" />
<polyline points="1149.0,902.4 1245.2,930.3" fill="none" stroke="#8f6d2c" stroke-width="0.9" />
<polyline points="1299.8,883.0 1245.2,930.3" fill="none" stroke="#8f6d2c" stroke-width="0.9" />
<polyline points="1149.0,902.4 1149.0,999.3" fill="none" stroke="#8f6d2c" stroke-width="0.9" />
<polyline points="1245.2,930.3 1245.2,1027.4" fill="none" stroke="#8f6d2c" stroke-width="0.9" />
<polyline points="1299.8,883.0 1299.8,978.9" fill="none" stroke="#8f6d2c" stroke-width="0.9" />
<polyline points="1149.0,999.3 1245.2,1027.4" fill="none" stroke="#8f6d2c" stroke-width="0.9" />
<polyline points="1245.2,1027.4 1299.8,978.9" fill="none" stroke="#8f6d2c" stroke-width="0.9" />
<polyline points="1204.0,855.5 1204.4,952.0" fill="none" stroke="#8f6d2c" stroke-width="0.9" />
<polyline points="1204.4,952.0 1149.0,999.3" fill="none" stroke="#8f6d2c" stroke-width="0.9" />
<polyline points="1204.4,952.0 1299.8,978.9" fill="none" stroke="#8f6d2c" stroke-width="0.9" />
<polyline points="1204.0,855.5 1299.8,883.0 1299.8,978.9 1245.2,1027.4 1149.0,999.3 1149.0,902.4 1204.0,855.5" fill="none" stroke="#f2b95a" stroke-width="1.2" />
<line x1="1224.6" y1="874" x2="1224.6" y2="888" stroke="#8fd0f0" stroke-width="1.6"/>
<line x1="1234" y1="885" x2="1240" y2="880" stroke="#b5e0a0" stroke-width="1.2"/>
<line x1="1243" y1="899" x2="1252" y2="902" stroke="#f0a0a8" stroke-width="1.2"/>
<ellipse cx="1224.5" cy="893.5" rx="17" ry="8.5" fill="#f3ead8" stroke="#2b3a4a" stroke-width="1.2"/>
<path d="M1238,890 C1233,885 1215,884.5 1211,892 C1210,899 1224,902 1236,898 L1230,895 C1224,897 1217,896 1217,893 C1218,889 1228,888 1232,891 Z" fill="#f0c070" stroke="#2b3a4a" stroke-width="1"/>
<circle cx="1224" cy="893.8" r="4.2" fill="#fff" stroke="#111" stroke-width="1.8"/><circle cx="1224" cy="893.8" r="1.3" fill="#111"/>
</svg>
<span class="t" id="logo" style="left:47.5px;top:8.10px;font-size:19px;line-height:22.80px;font-weight:400;color:#6e6e6e;transform:scaleX(1.1849);">onshape</span>
<span class="t" id="title" style="left:175px;top:8.40px;font-size:21px;line-height:25.20px;font-weight:700;color:#2f2f2f;transform:scaleX(1.0125);">1C - Practice Exercise Solutions</span>
<span class="t" id="sub" style="left:509px;top:14.00px;font-size:15px;line-height:18.00px;font-weight:400;color:#999;transform:scaleX(1.0131);">FRCDesignLib Rework</span>
<span class="t" id="stage" style="left:726.7px;top:12.30px;font-size:15px;line-height:18.00px;font-weight:400;color:#999;transform:scaleX(0.9808);">Stage 1</span>
<span class="t" id="n441" style="left:909.8px;top:12.10px;font-size:14px;line-height:16.80px;font-weight:400;color:#333;transform:scaleX(0.9565);">441</span>
<span class="t" id="n4007" style="left:972.1px;top:12.10px;font-size:14px;line-height:16.80px;font-weight:400;color:#333;transform:scaleX(0.9871);">4007</span>
<span class="t" id="n3" style="left:1044px;top:12.10px;font-size:14px;line-height:16.80px;font-weight:400;color:#333;transform:scaleX(0.7875);">3</span>
<span class="t" id="badge" style="left:1559.5px;top:8.00px;font-size:10px;line-height:12.00px;font-weight:700;color:#fff;transform:scaleX(1.1273);">9+</span>
<span class="t" id="share" style="left:1685px;top:11.30px;font-size:14.5px;line-height:17.40px;font-weight:700;color:#fff;transform:scaleX(0.8875);">Share</span>
<span class="t" id="user" style="left:1818.9px;top:12.10px;font-size:14.5px;line-height:17.40px;font-weight:400;color:#333;transform:scaleX(0.9306);">Andrew Card</span>
<span class="t" id="insert" style="left:182.5px;top:49.50px;font-size:15px;line-height:18.00px;font-weight:400;color:#333;transform:scaleX(0.9079);">Insert</span>
<span class="t" id="search" style="left:1298px;top:48.50px;font-size:15px;line-height:18.00px;font-weight:400;color:#333;transform:scaleX(0.8958);">Search tools...</span>
<span class="t" id="alt" style="left:1391.7px;top:52.90px;font-size:10.5px;line-height:12.60px;font-weight:400;color:#333;transform:scaleX(1.0115);">alt/⌥</span>
<span class="t" id="kc" style="left:1427.8px;top:52.90px;font-size:10.5px;line-height:12.60px;font-weight:400;color:#333;transform:scaleX(1.0200);">c</span>
<span class="t" id="filter" style="left:85.8px;top:91.80px;font-size:13.5px;line-height:16.20px;font-weight:400;color:#888;transform:scaleX(0.9419);font-style:italic;">Filter by name</span>
<span class="t" id="inst" style="left:44.4px;top:122.32px;font-size:13.3px;line-height:15.96px;font-weight:700;color:#333;transform:scaleX(0.9457);">Instances (8)</span>
<span class="t" id="row0" style="left:66.5px;top:149.70px;font-size:13.5px;line-height:16.20px;font-weight:400;color:#333;transform:scaleX(0.9643);">Assembly 1</span>
<span class="t" id="row1" style="left:86.5px;top:175.70px;font-size:13.5px;line-height:16.20px;font-weight:400;color:#333;transform:scaleX(0.9333);">Origin</span>
<span class="t" id="row2" style="left:86.5px;top:201.70px;font-size:13.5px;line-height:16.20px;font-weight:400;color:#333;transform:scaleX(0.9345);">50T HT...</span>
<span class="t" id="row3" style="left:86.5px;top:227.70px;font-size:13.5px;line-height:16.20px;font-weight:400;color:#333;transform:scaleX(0.9345);">60T HT...</span>
<span class="t" id="row4" style="left:86.5px;top:253.70px;font-size:13.5px;line-height:16.20px;font-weight:400;color:#333;transform:scaleX(0.9345);">60T HT...</span>
<span class="t" id="row5" style="left:86.5px;top:279.70px;font-size:13.5px;line-height:16.20px;font-weight:400;color:#1f2d3d;transform:scaleX(0.9397);">Bottom ...</span>
<span class="t" id="row6" style="left:86.5px;top:305.70px;font-size:13.5px;line-height:16.20px;font-weight:400;color:#1f2d3d;transform:scaleX(0.9153);">Motor S...</span>
<span class="t" id="row7" style="left:86.5px;top:331.70px;font-size:13.5px;line-height:16.20px;font-weight:400;color:#1f2d3d;transform:scaleX(0.9583);">Top Plat...</span>
<span class="t" id="row8" style="left:86.5px;top:357.70px;font-size:13.5px;line-height:16.20px;font-weight:400;color:#1f2d3d;transform:scaleX(0.9219);">Tube 1"x...</span>
<span class="t" id="row9" style="left:86.6px;top:383.70px;font-size:13.5px;line-height:16.20px;font-weight:400;color:#1f2d3d;transform:scaleX(0.8984);">Origin C...</span>
<span class="t" id="row10" style="left:63.5px;top:409.70px;font-size:13.5px;line-height:16.20px;font-weight:400;color:#333;transform:scaleX(0.9623);">Items (0)</span>
<span class="t" id="row11" style="left:63.5px;top:435.80px;font-size:13.5px;line-height:16.20px;font-weight:400;color:#333;transform:scaleX(0.9316);">Loads (0)</span>
<span class="t" id="row12" style="left:63.5px;top:461.70px;font-size:13.5px;line-height:16.20px;font-weight:400;color:#333;transform:scaleX(0.9477);">Mate Features (1)</span>
<span class="t" id="grp" style="left:105.3px;top:488.30px;font-size:12px;line-height:14.40px;font-weight:700;color:#6a8cab;transform:scaleX(1.0152);">Group 1</span>
<span class="t" id="dlg" style="left:264.2px;top:85.46px;font-size:12.9px;line-height:15.48px;font-weight:700;color:#333;transform:scaleX(0.9224);">Group 1</span>
<span class="t" id="dl0" style="left:268.5px;top:125.70px;font-size:13.5px;line-height:16.20px;font-weight:400;color:#444;transform:scaleX(0.9595);">Tube 1"x1"x7" &lt;1&gt;</span>
<span class="t" id="dl1" style="left:268.5px;top:149.50px;font-size:13.5px;line-height:16.20px;font-weight:400;color:#444;transform:scaleX(0.9779);">Bottom Plate &lt;1&gt;</span>
<span class="t" id="dl2" style="left:268.5px;top:173.60px;font-size:13.5px;line-height:16.20px;font-weight:400;color:#444;transform:scaleX(0.9621);">Motor Spacer Block &lt;1&gt;</span>
<span class="t" id="dl3" style="left:268.5px;top:197.40px;font-size:13.5px;line-height:16.20px;font-weight:400;color:#444;transform:scaleX(0.9374);">Origin Cube &lt;1&gt;</span>
<span class="t" id="mk" style="left:1896px;top:580.60px;font-size:20px;line-height:24.00px;font-weight:700;color:#fff;transform:scaleX(0.5294);font-family:'Liberation Serif',serif;">MK</span>
<span class="t" id="tab1" style="left:130.5px;top:1054.76px;font-size:14.4px;line-height:17.28px;font-weight:400;color:#555;transform:scaleX(0.9275);">Exercise 7 - Ver</span>
<span class="t" id="tab2" style="left:300.7px;top:1055.36px;font-size:14.4px;line-height:17.28px;font-weight:400;color:#555;transform:scaleX(0.9519);">Exercise 7 Assembly</span>
<span class="t" id="tab3" style="left:482.6px;top:1055.36px;font-size:14.4px;line-height:17.28px;font-weight:400;color:#333;transform:scaleX(0.9527);">Assembly 1</span>
<span class="t" id="tab4" style="left:684.4px;top:1055.36px;font-size:14.4px;line-height:17.28px;font-weight:400;color:#555;transform:scaleX(0.9472);">Exercise 7 Part Studio</span>
</body></html>
